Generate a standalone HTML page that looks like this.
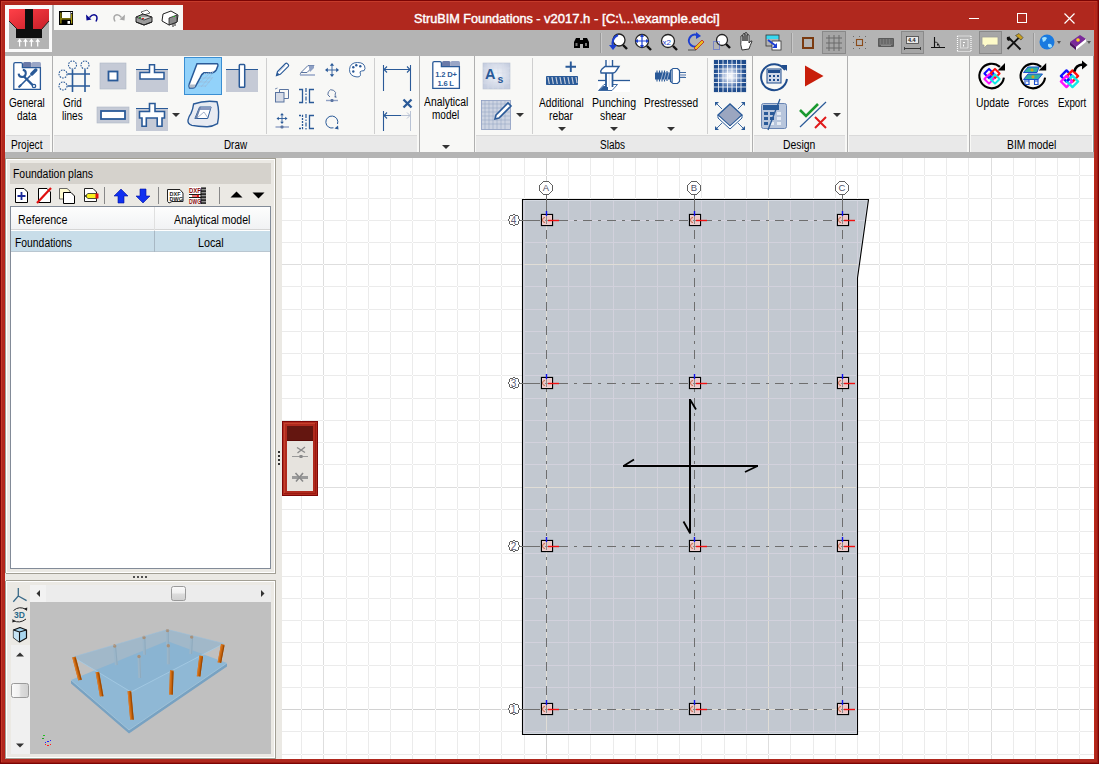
<!DOCTYPE html>
<html><head><meta charset="utf-8">
<style>
*{margin:0;padding:0;box-sizing:border-box}
html,body{width:1099px;height:764px;overflow:hidden;background:#b0281e;font-family:"Liberation Sans",sans-serif;font-size:12px;color:#000}
.a{position:absolute;overflow:visible}
.t{position:absolute;white-space:nowrap}
</style></head><body>
<div class="a" style="left:0px;top:0px;width:1099px;height:764px;background:#b0281e;"></div><div class="a" style="left:1px;top:1px;width:1097px;height:1px;background:#c43a2a;"></div><div class="a" style="left:1px;top:1px;width:1px;height:762px;background:#c43a2a;"></div><div class="a" style="left:1097px;top:1px;width:1px;height:762px;background:#9c1c12;"></div><div class="a" style="left:1px;top:762px;width:1097px;height:1px;background:#9c1c12;"></div><div class="a" style="left:4px;top:5px;width:1px;height:754px;background:#b82218;"></div><div class="a" style="left:1094px;top:5px;width:1px;height:754px;background:#c02818;"></div><div class="a" style="left:0px;top:0px;width:1099px;height:1px;background:#7c0404;"></div><div class="a" style="left:0px;top:0px;width:1px;height:764px;background:#7c0404;"></div><div class="a" style="left:1098px;top:0px;width:1px;height:764px;background:#7c0404;"></div><div class="a" style="left:0px;top:763px;width:1099px;height:1px;background:#7c0404;"></div><div class="t" style="left:414.00px;top:12.84px;font-size:12px;line-height:12px;color:#fff;transform:scaleX(1.0542);transform-origin:0 0;-webkit-text-stroke:0.4px #fff;">StruBIM Foundations -</div><div class="t" style="left:544.10px;top:12.84px;font-size:12px;line-height:12px;color:#fff;transform:scaleX(1.0840);transform-origin:0 0;-webkit-text-stroke:0.4px #fff;">v2017.h -</div><div class="t" style="left:602.30px;top:12.84px;font-size:12px;line-height:12px;color:#fff;transform:scaleX(1.1104);transform-origin:0 0;-webkit-text-stroke:0.4px #fff;">[C:\...\example.edci]</div><div class="a" style="left:969px;top:18px;width:10px;height:1px;background:#fff;"></div><div class="a" style="left:1017px;top:13px;width:10px;height:10px;border:1px solid #fff"></div><svg class="a" style="left:1064px;top:13px;" width="11" height="11" viewBox="0 0 11 11"><path d="M0.5 0.5L10.5 10.5M10.5 0.5L0.5 10.5" stroke="#fff" stroke-width="1.2"/></svg><div class="a" style="left:5px;top:5px;width:47px;height:47px;background:#fafafa;"></div><svg class="a" style="left:9px;top:9px;" width="40" height="40" viewBox="0 0 40 40"><rect width="40" height="40" fill="#b3b3b3"/>
    <defs><linearGradient id="lg" x1="0" y1="0" x2="1" y2="1"><stop offset="0" stop-color="#ff4048"/><stop offset="1" stop-color="#c81e28"/></linearGradient></defs>
    <path d="M0 0H40V12L33 20H8L0 12Z" fill="url(#lg)"/>
    <path d="M0 12L8 20" stroke="#222" stroke-width="1"/><path d="M40 12L33 20" stroke="#222" stroke-width="1"/>
    <rect x="16" y="0" width="8" height="20" fill="#0e0e0e"/>
    <rect x="7" y="20" width="26" height="9" fill="#0e0e0e"/>
    <g stroke="#fff" stroke-width="1.2" fill="none"><path d="M10.6 37.5V31M8.8 33L10.6 30.5L12.4 33"/><path d="M16.5 37.5V31M14.7 33L16.5 30.5L18.3 33"/><path d="M22.4 37.5V31M20.6 33L22.4 30.5L24.2 33"/><path d="M28.7 37.5V31M26.9 33L28.7 30.5L30.5 33"/></g></svg><div class="a" style="left:54px;top:5px;width:129px;height:25px;background:#f8f8f6;"></div><div class="a" style="left:52px;top:5px;width:2px;height:47px;background:#b4b4b4;"></div><svg class="a" style="left:59px;top:11px;" width="14" height="14" viewBox="0 0 14 14"><rect x="0" y="0" width="14" height="14" fill="#000"/><rect x="3" y="1" width="8.5" height="6" fill="#fff"/><rect x="1.3" y="1.5" width="1.2" height="11" fill="#a89a10"/><rect x="12" y="3" width="1.2" height="9.5" fill="#a89a10"/><rect x="1.5" y="7.3" width="11.5" height="1.2" fill="#a89a10"/><rect x="8.5" y="10" width="2.5" height="2.8" fill="#fff"/><rect x="12" y="1" width="1.2" height="1.2" fill="#fff"/></svg><svg class="a" style="left:85px;top:12px;" width="15" height="12" viewBox="0 0 15 12"><path d="M4.5 5.5Q8 1.5 11 3.5Q13 5.5 11 9.5" stroke="#0a0a90" stroke-width="1.5" fill="none"/><path d="M1 2.5L1.5 8.5L6.5 7.5Z" fill="#0a0a90"/></svg><svg class="a" style="left:111px;top:12px;" width="15" height="12" viewBox="0 0 15 12"><path d="M10.5 5.5Q7 1.5 4 3.5Q2 5.5 4 9.5" stroke="#a8a8a8" stroke-width="1.5" fill="none"/><path d="M14 2.5L13.5 8.5L8.5 7.5Z" fill="#a8a8a8"/></svg><svg class="a" style="left:135px;top:9px;" width="18" height="17" viewBox="0 0 18 17"><path d="M6 3L12 1L15 4L9 6Z" fill="#fff" stroke="#444" stroke-width="0.8"/><path d="M1 8L8 5L17 8V13L9 16L1 13Z" fill="#9a9a9a" stroke="#222" stroke-width="1"/><path d="M1 8L9 11L17 8" fill="#d8d8d8" stroke="#222" stroke-width="0.8"/><rect x="4" y="8" width="2" height="1" fill="#2a2"/><rect x="7" y="9" width="2" height="1" fill="#d22"/><path d="M1 13L9 16L17 13" stroke="#222" fill="none"/></svg><svg class="a" style="left:161px;top:10px;" width="18" height="17" viewBox="0 0 18 17"><path d="M2 4L10 1L17 5L16 12L8 15L1 11Z" fill="#fff" stroke="#222" stroke-width="1"/><path d="M8 8L16 5V12L8 15Z" fill="#8a8a8a" stroke="#222" stroke-width="0.8"/><rect x="12" y="6" width="2" height="1" fill="#2a2"/><path d="M12 14V17M14 13V16" stroke="#222"/></svg><div class="a" style="left:54px;top:30px;width:1040px;height:26px;background:#b4b4b4;"></div><div class="a" style="left:5px;top:52px;width:49px;height:4px;background:#b4b4b4;"></div><div class="a" style="left:600px;top:33px;width:1px;height:20px;background:#999;"></div><div class="a" style="left:601px;top:33px;width:1px;height:20px;background:#c8c8c8;"></div><div class="a" style="left:791px;top:33px;width:1px;height:20px;background:#999;"></div><div class="a" style="left:792px;top:33px;width:1px;height:20px;background:#c8c8c8;"></div><div class="a" style="left:1033px;top:33px;width:1px;height:20px;background:#999;"></div><div class="a" style="left:1034px;top:33px;width:1px;height:20px;background:#c8c8c8;"></div><div class="a" style="left:822px;top:31px;width:24px;height:23px;background:#a6a6a6;border:1px solid #8a8a8a"></div><div class="a" style="left:901px;top:31px;width:23px;height:23px;background:#a6a6a6;border:1px solid #8a8a8a"></div><div class="a" style="left:979px;top:31px;width:23px;height:23px;background:#a6a6a6;border:1px solid #8a8a8a"></div><svg class="a" style="left:573px;top:36px;" width="17" height="13" viewBox="0 0 17 13"><path d="M1 12V6L3 2H7V12ZM10 12V2H14L16 6V12Z" fill="#000"/><rect x="6" y="4" width="5" height="4" fill="#000"/><rect x="2.5" y="7" width="2" height="3" fill="#777"/><rect x="12" y="7" width="2" height="3" fill="#777"/></svg><svg class="a" style="left:0px;top:0px;pointer-events:none" width="1099" height="60" viewBox="0 0 1099 60"><circle cx="619" cy="40" r="6" fill="#fff" stroke="#222" stroke-width="1.3"/><path d="M623 45L627 49" stroke="#111" stroke-width="2.4"/><path d="M618 35Q611 38 613 47" stroke="#1d3fd0" stroke-width="2" fill="none"/><path d="M609 45L613 50L617 45Z" fill="#1d3fd0"/><circle cx="642" cy="41" r="6.5" fill="#fff" stroke="#222" stroke-width="1.3"/><path d="M647 46L651 50" stroke="#111" stroke-width="2.4"/><path d="M642 35V47M636 41H648" stroke="#1d3fd0" stroke-width="1.2"/><path d="M642 34L640 37H644ZM642 48L640 45H644ZM635 41L638 39V43ZM649 41L646 39V43Z" fill="#1d3fd0"/><circle cx="668" cy="41" r="6.5" fill="#fff" stroke="#222" stroke-width="1.3"/><path d="M673 46L677 50" stroke="#111" stroke-width="2.4"/><text x="662.5" y="44.5" font-size="8" fill="#1d3fd0" font-family="Liberation Sans">x2</text><path d="M697 35A6 6 0 1 0 699 45" stroke="#1d3fd0" stroke-width="2" fill="none"/><path d="M696 32L701 36L696 39Z" fill="#1d3fd0"/><path d="M694 48L702 40L704 42L696 50Z" fill="#e8c020" stroke="#c02020" stroke-width="0.8"/><path d="M688 50H696" stroke="#333" stroke-width="0.8"/><circle cx="722" cy="40" r="5.5" fill="#fff" stroke="#222" stroke-width="1.3"/><path d="M726 44L730 48" stroke="#111" stroke-width="2.4"/><rect x="713.5" y="41.5" width="6" height="8" fill="none" stroke="#2040e0" stroke-width="0.8" stroke-dasharray="1 1"/><path d="M742 50Q740 44 741 40V36Q742 35 743 36V41V34Q744 33 745 34V41V33Q746 32 747 33V41V35Q748 34 749 35V43Q751 40 752 41Q750 46 749 49Z" fill="#fff" stroke="#222" stroke-width="0.9"/><rect x="766" y="35" width="13" height="4" fill="#3ad8f0"/><rect x="766" y="35" width="13" height="11" fill="none" stroke="#333" stroke-width="0.8"/><rect x="772" y="41" width="9" height="9" fill="#fff" stroke="#333" stroke-width="0.8"/><path d="M768 40L776 46" stroke="#1d3fd0" stroke-width="1.8"/><path d="M777 43V48H772Z" fill="#1d3fd0"/><rect x="803" y="38" width="10" height="10" fill="none" stroke="#7a3a10" stroke-width="2"/><g stroke="#6a6a6a" stroke-width="1"><path d="M826 38H842M826 43H842M826 48H842M829 35V51M834 35V51M839 35V51"/></g><rect x="856.5" y="39.5" width="6" height="6" fill="none" stroke="#8a4a18" stroke-width="1.1"/><g fill="#6a6a6a"><rect x="853" y="36" width="1" height="1"/><rect x="859" y="36" width="1" height="1"/><rect x="865" y="36" width="1" height="1"/><rect x="853" y="42" width="1" height="1"/><rect x="865" y="42" width="1" height="1"/><rect x="853" y="48" width="1" height="1"/><rect x="859" y="48" width="1" height="1"/><rect x="865" y="48" width="1" height="1"/></g><rect x="878" y="38" width="16" height="9" rx="1" fill="#5a5a5a"/><g fill="#9a9a9a"><rect x="879.5" y="39.5" width="13" height="1"/><rect x="879.5" y="41.5" width="13" height="1"/><rect x="879.5" y="43.5" width="13" height="1"/></g><g fill="#5a5a5a"><rect x="881.5" y="39" width="1" height="5"/><rect x="884.5" y="39" width="1" height="5"/><rect x="887.5" y="39" width="1" height="5"/><rect x="890.5" y="39" width="1" height="5"/></g><rect x="881" y="45" width="10" height="1" fill="#8a8a8a"/><rect x="906.5" y="36.5" width="12" height="7" fill="#e8e8e8" stroke="#444" stroke-width="0.8"/><text x="908" y="42.3" font-size="5.5" font-weight="bold" fill="#222" font-family="Liberation Sans">4.4</text><path d="M904.5 48.5H920.5" stroke="#333" stroke-width="1"/><path d="M904.5 47V50M920.5 47V50" stroke="#333" stroke-width="0.9"/><path d="M931 47.5H945M934.5 37V47.5" stroke="#111" stroke-width="1.1"/><path d="M934.5 42Q939 42 939.5 47.5" stroke="#111" fill="none" stroke-width="0.8"/><rect x="937" y="44" width="1.5" height="1.5" fill="#111"/><g stroke="#fff" stroke-width="1.2" stroke-dasharray="1 1" fill="none"><path d="M957.5 36H971M957.5 51.5H971M957.5 36V51.5M971 36V51.5M960.5 39.5H968M960.5 48H968M960.5 39.5V48M968 39.5V48"/></g><g fill="#fff"><rect x="963" y="42" width="2" height="1"/><rect x="963" y="44.5" width="1" height="2"/></g><path d="M982 37H998V45H987L984 48V45H982Z" fill="#fdfac8" stroke="#999" stroke-width="0.8"/><path d="M1007.5 49L1019 37.5M1009 38L1020.5 49.5" stroke="#111" stroke-width="1.9"/><path d="M1015.5 35.5L1019 33.5L1023 37.5L1021 40Z" fill="#c8a020" stroke="#333" stroke-width="0.6"/><path d="M1007 37Q1006 40 1009 41L1010.5 39.5Q1009 38.5 1010 36.5Z" fill="#111"/><circle cx="1047" cy="42" r="7.5" fill="#1a7ae0"/><path d="M1042 38Q1045 36 1047 38Q1046 41 1043 42Z M1048 44Q1052 43 1052 47Q1049 49 1048 46Z" fill="#9fe0ff"/><path d="M1057 41L1061 41L1059 44Z" fill="#555"/><path d="M1070 42L1080 35L1086 39L1076 47Z" fill="#7a2a9a"/><path d="M1070 42L1076 47V50L1070 45Z" fill="#4a1060"/><path d="M1076 47L1086 39V42L1076 50Z" fill="#fff"/><circle cx="1078" cy="40" r="1.8" fill="#ffd020"/><path d="M1087 41L1091 41L1089 44Z" fill="#555"/></svg><div class="a" style="left:5px;top:56px;width:1089px;height:96px;background:#f8f8f6;"></div><div class="a" style="left:5px;top:135px;width:45px;height:17px;background:#e9e9e9;"></div><div class="a" style="left:5px;top:135px;width:45px;height:1px;background:#dadada;"></div><div class="a" style="left:54px;top:135px;width:363px;height:17px;background:#e9e9e9;"></div><div class="a" style="left:54px;top:135px;width:363px;height:1px;background:#dadada;"></div><div class="a" style="left:476px;top:135px;width:274px;height:17px;background:#e9e9e9;"></div><div class="a" style="left:476px;top:135px;width:274px;height:1px;background:#dadada;"></div><div class="a" style="left:754px;top:135px;width:91px;height:17px;background:#e9e9e9;"></div><div class="a" style="left:754px;top:135px;width:91px;height:1px;background:#dadada;"></div><div class="a" style="left:849px;top:135px;width:118px;height:17px;background:#e9e9e9;"></div><div class="a" style="left:849px;top:135px;width:118px;height:1px;background:#dadada;"></div><div class="a" style="left:971px;top:135px;width:121px;height:17px;background:#e9e9e9;"></div><div class="a" style="left:971px;top:135px;width:121px;height:1px;background:#dadada;"></div><div class="a" style="left:52px;top:56px;width:1px;height:96px;background:#b0b0b0;"></div><div class="a" style="left:419px;top:56px;width:1px;height:96px;background:#b0b0b0;"></div><div class="a" style="left:474px;top:56px;width:1px;height:96px;background:#b0b0b0;"></div><div class="a" style="left:752px;top:56px;width:1px;height:96px;background:#b0b0b0;"></div><div class="a" style="left:847px;top:56px;width:1px;height:96px;background:#b0b0b0;"></div><div class="a" style="left:969px;top:56px;width:1px;height:96px;background:#b0b0b0;"></div><div class="a" style="left:5px;top:56px;width:1px;height:96px;background:#eaf2f2;"></div><div class="a" style="left:1093px;top:56px;width:1px;height:96px;background:#909898;"></div><div class="a" style="left:1092px;top:135px;width:1px;height:17px;background:#fbfbfb;"></div><div class="a" style="left:266px;top:58px;width:1px;height:76px;background:#cfcfcf;"></div><div class="a" style="left:374px;top:58px;width:1px;height:76px;background:#cfcfcf;"></div><div class="a" style="left:532px;top:58px;width:1px;height:76px;background:#cfcfcf;"></div><div class="a" style="left:707px;top:58px;width:1px;height:76px;background:#cfcfcf;"></div><div class="t" style="left:11.00px;top:138.84px;font-size:12px;line-height:12px;color:#000;transform:scaleX(0.8421);transform-origin:0 0;">Project</div><div class="t" style="left:224.00px;top:138.84px;font-size:12px;line-height:12px;color:#000;transform:scaleX(0.8214);transform-origin:0 0;">Draw</div><div class="t" style="left:600.00px;top:138.84px;font-size:12px;line-height:12px;color:#000;transform:scaleX(0.8333);transform-origin:0 0;">Slabs</div><div class="t" style="left:783.00px;top:138.84px;font-size:12px;line-height:12px;color:#000;transform:scaleX(0.8649);transform-origin:0 0;">Design</div><div class="t" style="left:1007.00px;top:138.84px;font-size:12px;line-height:12px;color:#000;transform:scaleX(0.8596);transform-origin:0 0;">BIM model</div><div class="t" style="left:9.00px;top:96.84px;font-size:12px;line-height:12px;color:#000;transform:scaleX(0.8372);transform-origin:0 0;">General</div><div class="t" style="left:17.00px;top:109.84px;font-size:12px;line-height:12px;color:#000;transform:scaleX(0.8333);transform-origin:0 0;">data</div><div class="t" style="left:63.00px;top:96.84px;font-size:12px;line-height:12px;color:#000;transform:scaleX(0.8261);transform-origin:0 0;">Grid</div><div class="t" style="left:62.00px;top:109.84px;font-size:12px;line-height:12px;color:#000;transform:scaleX(0.8400);transform-origin:0 0;">lines</div><div class="t" style="left:424.00px;top:95.84px;font-size:12px;line-height:12px;color:#000;transform:scaleX(0.8627);transform-origin:0 0;">Analytical</div><div class="t" style="left:431.50px;top:108.84px;font-size:12px;line-height:12px;color:#000;transform:scaleX(0.8333);transform-origin:0 0;">model</div><div class="t" style="left:539.00px;top:96.84px;font-size:12px;line-height:12px;color:#000;transform:scaleX(0.8491);transform-origin:0 0;">Additional</div><div class="t" style="left:549.00px;top:109.84px;font-size:12px;line-height:12px;color:#000;transform:scaleX(0.8571);transform-origin:0 0;">rebar</div><div class="t" style="left:592.00px;top:96.84px;font-size:12px;line-height:12px;color:#000;transform:scaleX(0.8800);transform-origin:0 0;">Punching</div><div class="t" style="left:600.00px;top:109.84px;font-size:12px;line-height:12px;color:#000;transform:scaleX(0.8667);transform-origin:0 0;">shear</div><div class="t" style="left:644.00px;top:96.84px;font-size:12px;line-height:12px;color:#000;transform:scaleX(0.8438);transform-origin:0 0;">Prestressed</div><div class="t" style="left:975.50px;top:96.84px;font-size:12px;line-height:12px;color:#000;transform:scaleX(0.8590);transform-origin:0 0;">Update</div><div class="t" style="left:1017.50px;top:96.84px;font-size:12px;line-height:12px;color:#000;transform:scaleX(0.8297);transform-origin:0 0;">Forces</div><div class="t" style="left:1057.50px;top:96.84px;font-size:12px;line-height:12px;color:#000;transform:scaleX(0.8143);transform-origin:0 0;">Export</div><svg class="a" style="left:0px;top:0px;pointer-events:none" width="1099" height="160" viewBox="0 0 1099 160"><path d="M442 145H450L446 149Z" fill="#333"/><path d="M558 127H566L562 131Z" fill="#333"/><path d="M610 127H618L614 131Z" fill="#333"/><path d="M667 127H675L671 131Z" fill="#333"/><path d="M172 113H180L176 117Z" fill="#333"/><path d="M516 113H524L520 117Z" fill="#333"/><path d="M833 113H841L837 117Z" fill="#333"/></svg><svg class="a" style="left:0px;top:0px;pointer-events:none" width="1099" height="160" viewBox="0 0 1099 160"><path d="M23 67V63.5Q23 62 24.5 62H30Q31.5 62 31.5 63.5V67Z" fill="#6a7aa8"/><path d="M31.5 67V63.5Q31.5 62 33 62H39.5Q41 62 41 63.5V67Z" fill="#9aa6c6"/><path d="M13.8 89.3V64Q13.8 62.6 15.2 62.6H21Q22.4 62.6 22.4 64V67.6H40.4V89.3Z" fill="#fff" stroke="#2a5a98" stroke-width="1.3"/><g transform="translate(0,-1)"><path d="M31.8 75L35.8 71" stroke="#2a5a98" stroke-width="3.4" stroke-linecap="round"/><path d="M30.5 76.5L20 87" stroke="#2a5a98" stroke-width="1.6"/><path d="M20.5 86.5L19.2 87.8" stroke="#2a5a98" stroke-width="2.2" stroke-linecap="round"/><path d="M24 77.5L33.2 86.6" stroke="#2a5a98" stroke-width="2.3"/><path d="M18.6 74.6A3.6 3.6 0 1 0 22.8 70.8" stroke="#2a5a98" stroke-width="2" fill="none"/><circle cx="34" cy="87" r="1.7" fill="#fff" stroke="#2a5a98" stroke-width="1.3"/></g><g stroke="#2a5a98" stroke-width="1.6"><path d="M72.5 69.5V92M85 69.5V92M67.5 74H90M67.5 86H90"/></g><g fill="none" stroke="#2a5a98" stroke-width="1.1" stroke-dasharray="1.6 1.1"><circle cx="72.5" cy="65" r="4"/><circle cx="85" cy="65" r="4"/><circle cx="63" cy="74" r="4"/><circle cx="63" cy="86" r="4"/></g><rect x="100" y="63" width="26" height="26" fill="#c5cad6" stroke="#b0b7c6" stroke-width="0.6"/><rect x="108.5" y="71.5" width="9" height="9" fill="#fff" stroke="#2a5a98" stroke-width="1.8"/><rect x="97" y="107" width="32" height="16" fill="#c5cad6" stroke="#b0b7c6" stroke-width="0.6"/><rect x="101" y="111" width="24" height="8" fill="#fff" stroke="#2a5a98" stroke-width="1.8"/><rect x="136" y="69" width="32" height="23" fill="#c5cad6"/><path d="M136 69.5H168" stroke="#2a5a98" stroke-width="1"/><path d="M149.5 64.8V72.5H140V79H164V72.5H154.5V64.8Z" fill="#fff" stroke="#2a5a98" stroke-width="1.5"/><rect x="136" y="108" width="32" height="23" fill="#c5cad6"/><path d="M136 108.5H168" stroke="#2a5a98" stroke-width="1"/><path d="M149.5 103.5V111.5H139.5V118H142V126.3H146.3V118H157.2V126.3H162V118H164.5V111.5H155V103.5Z" fill="#fff" stroke="#2a5a98" stroke-width="1.6"/><rect x="184.5" y="57.5" width="37" height="37" fill="#92d2fa" stroke="#3a8ed2" stroke-width="1"/><g stroke="#9ab0cc" stroke-width="0.5"><path d="M201 87L212 74M205 87L213 77M198 84L210 73M199 78H212M197 82H210M198 86H206"/></g><path d="M189.5 88Q188.5 86 189.3 84L197 63.8H217Q218.2 64 217.8 66L216.3 69.8Q214.5 72.8 211 72.8L204 72.8Q201.5 74 200.2 77.6L195.5 86.3Q194.5 88 193 88Z" fill="#fff" stroke="#2a5a98" stroke-width="1.5"/><path d="M189.5 84.5H195.5L194.5 87.5H189.5Z" fill="#b4bcc8"/><path d="M204 74Q209 73 213 72.5" stroke="#c8d0dc" stroke-width="1" fill="none" stroke-dasharray="1 1"/><rect x="226" y="69" width="32" height="23" fill="#c5cad6"/><path d="M226 69.5H258" stroke="#2a5a98" stroke-width="1"/><rect x="239.3" y="64.6" width="5.4" height="22.6" rx="0.8" fill="#fff" stroke="#2a5a98" stroke-width="1.5"/><path d="M193.6 104Q205 100 217 101.8Q220 112 217.5 123.7Q212 127 206.4 126.7Q198 126.5 191.9 125.4Q187.5 124 188 120.2Q189 116 191 113.4Q193 109 193.6 104Z" fill="#e8ebf2" stroke="#2a5a98" stroke-width="1.4"/><path d="M199.6 107H211.1L207.7 118.5H194.9Z" fill="#fff" stroke="#2a5a98" stroke-width="1"/><path d="M199.6 107H211.1L210.2 110H198.7Z" fill="#8a9ac0"/><path d="M199.6 107L194.9 118.5H197L201 107Z" fill="#6a80a8"/><path d="M197 118L204 112L208 118" stroke="#6a80a8" stroke-width="0.6" fill="none"/><path d="M276.5 75.5L277.5 71.5L285.5 63.5Q286.5 62.8 287.5 63.8L288.3 64.6Q289 65.5 288.3 66.3L280.3 74.3Z" fill="#fff" stroke="#2a5a98" stroke-width="1.2"/><path d="M276.5 75.5L277.3 72.3L279.6 74.6Z" fill="#2a5a98"/><path d="M278.5 72L284.8 65.7" stroke="#8ca0c4" stroke-width="0.8"/><path d="M301 72.5L308 65.5H314L307 72.5Z" fill="#fff" stroke="#5a74a0" stroke-width="1"/><path d="M308.5 65.5H314V68L310 72" fill="#8ea0c4"/><path d="M300 75H315" stroke="#8ea0c4" stroke-width="1.4"/><path d="M301 72.5L300 74.5" stroke="#5a74a0" stroke-width="0.8"/><g stroke="#2a5a98" stroke-width="0.9" fill="none"><path d="M332 64V76M326 70H338"/></g><g fill="#2a5a98"><path d="M332 63L329.8 65.8H334.2Z"/><path d="M332 77L329.8 74.2H334.2Z"/><path d="M325 70L327.8 67.8V72.2Z"/><path d="M339 70L336.2 67.8V72.2Z"/></g><path d="M357.5 62.5Q365 62.5 365 68.5Q365 71.5 361.5 71Q359 71 360.5 74.5Q360.5 77.5 356 76.8Q349.5 76 349.5 69.5Q350 62.5 357.5 62.5Z" fill="#fff" stroke="#2a5a98" stroke-width="0.9"/><g fill="#2a5a98"><circle cx="353.3" cy="67.3" r="1.2"/><circle cx="356.3" cy="65.3" r="1.2"/><circle cx="360.3" cy="66.3" r="1.2"/><circle cx="353.3" cy="71.5" r="1.2"/></g><path d="M279.5 92V89.5H288.5V98.5H284" fill="none" stroke="#5a74a0" stroke-width="1"/><rect x="275.5" y="92.5" width="8.5" height="9.5" fill="#d6dbe6" stroke="#5a74a0" stroke-width="1"/><path d="M275 89L277.5 88" stroke="#5a74a0" stroke-width="0.8"/><g stroke="#2a5a98" stroke-width="1.3" fill="none"><path d="M299 89.5H302.5V102.5H299M314 89.5H309.5V102.5H314"/></g><path d="M306 88V103.5" stroke="#2a5a98" stroke-width="1.2" stroke-dasharray="4 1.5 1.5 1.5"/><path d="M335 95.5A3.8 3.8 0 1 0 330 97" stroke="#5a74a0" stroke-width="1" fill="none"/><path d="M334 97L336 95L336.5 98Z" fill="#5a74a0"/><path d="M326 100.5H338" stroke="#8ea0c4" stroke-width="1.4"/><rect x="330.5" y="99" width="3" height="3" rx="1" fill="#5a74a0"/><g stroke="#2a5a98" stroke-width="0.9" fill="none"><path d="M282 114V123M277.5 118.5H286.5"/></g><g fill="#2a5a98"><path d="M282 113L280.2 115.3H283.8Z"/><path d="M282 124L280.2 121.7H283.8Z"/><path d="M276.5 118.5L278.8 116.7V120.3Z"/><path d="M287.5 118.5L285.2 116.7V120.3Z"/></g><path d="M275.5 127H289" stroke="#8ea0c4" stroke-width="1.4"/><rect x="280.5" y="125.5" width="3" height="3" rx="1" fill="#5a74a0"/><g stroke="#2a5a98" stroke-width="1.3" fill="none"><path d="M314 115.5H309.5V128.5H314"/></g><path d="M299 115.5H302.5V128.5H299" stroke="#2a5a98" stroke-width="1.3" fill="none" stroke-dasharray="2 1"/><path d="M306 114V129.5" stroke="#2a5a98" stroke-width="1.2" stroke-dasharray="4 1.5 1.5 1.5"/><path d="M337.5 124A6 6 0 1 0 333.5 127.8" stroke="#2a5a98" stroke-width="1" fill="none"/><path d="M334.5 128.5L338 125.5L338.5 129.5Z" fill="#2a5a98"/><g stroke="#2a5a98" stroke-width="1.1" fill="none"><path d="M383.5 65V91M410.5 65V91M384 69.5H410M387 66.5L384 69.5L387 72.5M407 66.5L410 69.5L407 72.5"/><path d="M383.5 111V131M384 115.5H401M387 112.5L384 115.5L387 118.5"/></g><g stroke="#b8c2d4" stroke-width="1" fill="none"><path d="M401 115.5H410M407 112.5L410 115.5L407 118.5M410.5 111V131"/></g><path d="M403.5 99.5L411.5 107.5M411.5 99.5L403.5 107.5" stroke="#2a5a98" stroke-width="2.3"/><path d="M442 66V62.5Q442 61 443.5 61H449Q450.5 61 450.5 62.5V66Z" fill="#6a7aa8"/><path d="M450.5 66V62.5Q450.5 61 452 61H458.5Q460 61 460 62.5V66Z" fill="#9aa6c6"/><path d="M432.8 88.3V63Q432.8 61.6 434.2 61.6H440Q441.4 61.6 441.4 63V66.6H459.4V88.3Z" fill="#fff" stroke="#2a5a98" stroke-width="1.3"/><text x="435.3" y="77" font-size="7.6" font-weight="bold" fill="#2a5a98" font-family="Liberation Sans" letter-spacing="-0.2">1.2 D+</text><text x="437.5" y="85.5" font-size="7.6" font-weight="bold" fill="#2a5a98" font-family="Liberation Sans" letter-spacing="-0.2">1.6 L</text><defs><radialGradient id="rgas" cx="0.5" cy="0.45" r="0.6"><stop offset="0" stop-color="#f4f6fa"/><stop offset="1" stop-color="#c6cee0"/></radialGradient></defs><rect x="483" y="63" width="27" height="26" fill="url(#rgas)" stroke="#b9c1d2" stroke-width="0.6"/><g stroke="#d6dcea" stroke-width="0.6"><path d="M483 68H510M483 73H510M483 78H510M483 83H510M488 63V89M493 63V89M498 63V89M503 63V89"/></g><text x="485" y="79.3" font-size="14.5" font-weight="bold" fill="#2a5a98" font-family="Liberation Sans">A</text><text x="497.5" y="83" font-size="10.5" font-weight="bold" fill="#2a5a98" font-family="Liberation Sans">s</text><rect x="481.5" y="100.5" width="29" height="29" fill="#cdd4e2" stroke="#8a9cc0" stroke-width="0.8"/><g stroke="#98a8c6" stroke-width="0.6"><path d="M481 104H511M481 108H511M481 112H511M481 116H511M481 120H511M481 124H511M485 100V130M489 100V130M493 100V130M497 100V130M501 100V130M505 100V130"/></g><path d="M496 115L508 103L511 106L499 118L495 119Z" fill="#fff" stroke="#2a5a98" stroke-width="1.6"/><rect x="546" y="76" width="32" height="9" rx="0.8" fill="#2a5a98"/><g stroke="#c6cedc" stroke-width="1.2"><path d="M548 77L549.3 84M552 77L553.3 84M556 77L557.3 84M560 77L561.3 84M564 77L565.3 84M568 77L569.3 84M572 77L573.3 84M576 77L577 83"/></g><path d="M570.8 61.5V72M565.5 66.8H576" stroke="#2a5a98" stroke-width="1.9"/><rect x="598" y="80" width="32" height="12" fill="#fff"/><path d="M598 80.5H630" stroke="#2a5a98" stroke-width="1.3"/><path d="M598.5 90.5L604 84.5H617.5L612 90.5Z" fill="#fff" stroke="#2a5a98" stroke-width="0.9"/><path d="M599.5 90L603.5 86H608V90Z" fill="#2a5a98"/><rect x="606" y="60" width="6.5" height="27" fill="#fff"/><path d="M606 60V87M612.5 60V87" stroke="#2a5a98" stroke-width="1.4"/><path d="M609.2 60V87" stroke="#c8d2e2" stroke-width="0.6"/><path d="M601 73Q600 71 602 69L605 66.5H619L616 71Q615 73 613 73Z" fill="#fff" stroke="#2a5a98" stroke-width="1.4"/><path d="M606 73V87M612.5 73V87" stroke="#2a5a98" stroke-width="1.4"/><path d="M655 72.5H670V79.5H655Z" fill="#2a5a98"/><g stroke="#2a5a98" stroke-width="1.1"><path d="M657 70.5V81.5M659.5 70.5V81.5M662 70.5V81.5M664.5 70.5V81.5M667 71V81"/></g><g stroke="#a8b8d4" stroke-width="0.9"><path d="M661 80L663 72.5M664 80L666 72.5M667 80L669 72.5"/></g><path d="M670.5 70.5L673 68.5H677.5L679.5 70.5V81.5L677.5 83.5H673L670.5 81.5Z" fill="#fff" stroke="#2a5a98" stroke-width="1.2"/><rect x="671.5" y="70" width="1.2" height="12" fill="#2a5a98"/><path d="M679.5 72.5H686M679.5 75H686M679.5 77.5H686" stroke="#2a5a98" stroke-width="0.9"/><rect x="680" y="74.5" width="5" height="2" fill="#a8b8d4"/><defs><radialGradient id="rg"><stop offset="0" stop-color="#fff"/><stop offset="0.3" stop-color="#c4d0e6"/><stop offset="0.75" stop-color="#3a64a4"/><stop offset="1" stop-color="#1f4c8c"/></radialGradient></defs><rect x="714" y="60" width="32" height="32" fill="url(#rg)"/><rect x="714.5" y="60.5" width="31" height="31" fill="none" stroke="#1f4c8c" stroke-width="1.2"/><g stroke="#fff" stroke-width="0.8"><path d="M714 64.5H746M714 69H746M714 73.5H746M714 78H746M714 82.5H746M714 87H746M718.5 60V92M723 60V92M727.5 60V92M732 60V92M736.5 60V92M741 60V92"/></g><path d="M718 115L730 104L742 115L730 126Z" fill="#9ba6c0" stroke="#2a5a98" stroke-width="1.3"/><path d="M718 115V118L730 129L742 118V115L730 126Z" fill="#fff" stroke="#2a5a98" stroke-width="1"/><g stroke="#2a5a98" stroke-width="0.9"><path d="M716 103L722 109M744 103L738 109M716 129L722 123M744 129L738 123"/></g><g fill="#2a5a98"><path d="M715 102H719L715 106Z"/><path d="M745 102H741L745 106Z"/><path d="M715 130H719L715 126Z"/><path d="M745 130H741L745 126Z"/></g><path d="M785 70A13 13 0 1 0 787 79" stroke="#1f4c8c" stroke-width="2" fill="none"/><path d="M781 65H787V71Z" fill="#1f4c8c"/><rect x="767" y="69" width="14" height="14" fill="#cfd8e8" stroke="#1f4c8c" stroke-width="1"/><rect x="768" y="70" width="12" height="3" fill="#1f4c8c"/><g fill="#1f4c8c"><rect x="769" y="75" width="2" height="2"/><rect x="773" y="75" width="2" height="2"/><rect x="777" y="75" width="2" height="2"/><rect x="769" y="79" width="2" height="2"/><rect x="773" y="79" width="2" height="2"/><rect x="777" y="79" width="2" height="2"/></g><path d="M805 65.5L823.5 76L805 86.5Z" fill="#c81e0a"/><rect x="761.5" y="103.5" width="25" height="25" rx="2" fill="#b8c6dc" stroke="#6a86b4" stroke-width="1"/><rect x="763" y="105" width="16" height="5" fill="#2a5a98"/><g fill="#2a5a98"><rect x="764" y="112" width="4" height="3"/><rect x="770" y="112" width="4" height="3"/><rect x="764" y="117" width="4" height="3"/><rect x="770" y="117" width="4" height="3"/><rect x="764" y="122" width="4" height="3"/></g><g fill="#e6ecf4"><rect x="777" y="112" width="4" height="3"/><rect x="777" y="117" width="4" height="3"/><rect x="770" y="122" width="4" height="3"/><rect x="777" y="122" width="4" height="3"/></g><path d="M780 99L768 130" stroke="#2a5a98" stroke-width="1.3"/><path d="M800 127L826 102" stroke="#2a5a98" stroke-width="1.2"/><path d="M800 110L806 116L818 104" stroke="#1a9a30" stroke-width="2.6" fill="none"/><path d="M815 117L826 128M826 117L815 128" stroke="#e01a1a" stroke-width="2"/><path d="M999.93 66.86A12.3 12.3 0 1 0 1003.88 77.71" stroke="#000" stroke-width="2.1" fill="none"/><path d="M1005.0 63V70.5H997.5Z" fill="#000"/><path d="M984.4 73.5L989 68.9L993.6 73.5L989 78.1Z" fill="none" stroke="#1010ff" stroke-width="2" stroke-linejoin="round"/><path d="M990.4 73.5L995 68.9L999.6 73.5L995 78.1Z" fill="none" stroke="#ff1010" stroke-width="2" stroke-linejoin="round"/><path d="M984.4 79L989 74.4L993.6 79L989 83.6Z" fill="none" stroke="#ff10ff" stroke-width="2" stroke-linejoin="round"/><path d="M990.4 79L995 74.4L999.6 79L995 83.6Z" fill="none" stroke="#10e8e8" stroke-width="2" stroke-linejoin="round"/><path d="M991.3 75.8L989.46 77.64" stroke="#1010ff" stroke-width="2"/><path d="M1041.13 66.86A12.3 12.3 0 1 0 1045.08 77.71" stroke="#000" stroke-width="2.1" fill="none"/><path d="M1046.2 63V70.5H1038.7Z" fill="#000"/><path d="M1023.5 72.5L1028 67H1039L1037 72.5Z" fill="#30b0a0" stroke="#1a50d0" stroke-width="1"/><path d="M1023.5 79.5L1028 74H1042.5L1038 79.5Z" fill="#30b0a0" stroke="#1a50d0" stroke-width="1"/><circle cx="1032" cy="70" r="1.6" fill="#d0a020"/><circle cx="1033" cy="76.8" r="1.6" fill="#d0a020"/><path d="M1025 79V84.5M1029 79V84.5M1034.5 79V84.5M1038 79V84.5" stroke="#1a50d0" stroke-width="1.1"/><path d="M1025 84.5H1029.5M1034 84.5H1038.5M1026 81H1029M1035 81H1038" stroke="#1a50d0" stroke-width="1"/><path d="M1060.9 76.0L1066.5 70.4L1072.1 76.0L1066.5 81.6Z" fill="none" stroke="#1010ff" stroke-width="2.4" stroke-linejoin="round"/><path d="M1066.9 76.0L1072.5 70.4L1078.1 76.0L1072.5 81.6Z" fill="none" stroke="#ff1010" stroke-width="2.4" stroke-linejoin="round"/><path d="M1060.9 81.5L1066.5 75.9L1072.1 81.5L1066.5 87.1Z" fill="none" stroke="#ff10ff" stroke-width="2.4" stroke-linejoin="round"/><path d="M1066.9 81.5L1072.5 75.9L1078.1 81.5L1072.5 87.1Z" fill="none" stroke="#10e8e8" stroke-width="2.4" stroke-linejoin="round"/><path d="M1069.3 78.8L1067.06 81.04" stroke="#1010ff" stroke-width="2.4"/><path d="M1074.5 71.5Q1075.5 65 1083 64.5" stroke="#000" stroke-width="2.6" fill="none"/><path d="M1082 60.5L1087.5 65L1082 69.5Z" fill="#000"/></svg><div class="a" style="left:5px;top:152px;width:1089px;height:6px;background:#b4b4b4;"></div><div class="a" style="left:5px;top:158px;width:277px;height:601px;background:#ebe9e4;"></div><div class="a" style="left:5px;top:158px;width:271px;height:1px;background:#a29f94;"></div><div class="a" style="left:5px;top:158px;width:1px;height:601px;background:#a29f94;"></div><div class="a" style="left:6px;top:159px;width:269px;height:1px;background:#fff;"></div><div class="a" style="left:6px;top:159px;width:1px;height:598px;background:#fff;"></div><div class="a" style="left:275px;top:158px;width:1px;height:601px;background:#a29f94;"></div><div class="a" style="left:274px;top:159px;width:1px;height:599px;background:#fff;"></div><div class="a" style="left:6px;top:757px;width:269px;height:1px;background:#fff;"></div><div class="a" style="left:5px;top:758px;width:271px;height:1px;background:#a29f94;"></div><div class="a" style="left:10px;top:163px;width:261px;height:21px;background:#d5d2cc;"></div><div class="t" style="left:13.30px;top:167.84px;font-size:12px;line-height:12px;color:#000;transform:scaleX(0.8696);transform-origin:0 0;">Foundation plans</div><div class="a" style="left:10px;top:206px;width:261px;height:363px;background:#fff;border:1px solid #828b98"></div><div class="a" style="left:11px;top:207px;width:259px;height:23px;background:linear-gradient(#fdfdfd,#f1f2f4);border-bottom:1px solid #d5d5d5"></div><div class="a" style="left:154px;top:207px;width:1px;height:24px;background:#e0e0e0;"></div><div class="a" style="left:11px;top:231px;width:259px;height:21px;background:#c8dde9;"></div><div class="a" style="left:11px;top:251px;width:259px;height:1px;background:#b9c6d0;"></div><div class="a" style="left:154px;top:231px;width:1px;height:21px;background:#a8b8c4;"></div><div class="t" style="left:18.00px;top:213.84px;font-size:12px;line-height:12px;color:#000;transform:scaleX(0.8929);transform-origin:0 0;">Reference</div><div class="t" style="left:174.00px;top:213.84px;font-size:12px;line-height:12px;color:#000;transform:scaleX(0.8736);transform-origin:0 0;">Analytical model</div><div class="t" style="left:15.00px;top:236.84px;font-size:12px;line-height:12px;color:#000;transform:scaleX(0.8636);transform-origin:0 0;">Foundations</div><div class="t" style="left:198.00px;top:236.84px;font-size:12px;line-height:12px;color:#000;transform:scaleX(0.8966);transform-origin:0 0;">Local</div><div class="a" style="left:5px;top:573px;width:271px;height:1px;background:#a29f94;"></div><div class="a" style="left:6px;top:572px;width:269px;height:1px;background:#fff;"></div><div class="a" style="left:5px;top:574px;width:271px;height:7px;background:#ebe9e4;"></div><div class="a" style="left:133px;top:576px;width:2px;height:2px;background:#505050;"></div><div class="a" style="left:137px;top:576px;width:2px;height:2px;background:#505050;"></div><div class="a" style="left:141px;top:576px;width:2px;height:2px;background:#505050;"></div><div class="a" style="left:145px;top:576px;width:2px;height:2px;background:#505050;"></div><div class="a" style="left:5px;top:580px;width:271px;height:1px;background:#a29f94;"></div><div class="a" style="left:6px;top:581px;width:269px;height:1px;background:#fff;"></div><div class="a" style="left:5px;top:573px;width:1px;height:8px;background:#ebe9e4;"></div><div class="a" style="left:5px;top:574px;width:1px;height:6px;background:#ebe9e4;"></div><svg class="a" style="left:0px;top:150px;" width="290" height="620" viewBox="0 0 290 620"><g transform="translate(0,-150)"><path d="M15.5 188.5H24L27.5 192V202.5H15.5Z" fill="#fff" stroke="#000" stroke-width="1"/><path d="M21.5 192V200M17.5 196H25.5" stroke="#1a2a9a" stroke-width="1.8"/><path d="M38.5 188.5H47L50.5 192V202.5H38.5Z" fill="#fff" stroke="#000" stroke-width="1"/><path d="M37 203L51 188" stroke="#e01010" stroke-width="2.2"/><path d="M59.5 188.5H67L70 191V199H59.5Z" fill="#fffbd0" stroke="#444" stroke-width="0.8"/><path d="M63.5 192.5H71L74.5 196V203.5H63.5Z" fill="#fff" stroke="#000" stroke-width="1"/><path d="M84.5 188.5H93L96.5 192V201.5H84.5Z" fill="#fff" stroke="#222" stroke-width="1"/><path d="M85 196L88 193.5H97V198.5H88Z" fill="#f8f020" stroke="#222" stroke-width="0.8"/><rect x="95.5" y="193.5" width="3" height="5" fill="#e01010"/><path d="M85 196L87 195V197Z" fill="#333"/><rect x="104" y="187" width="1" height="17" fill="#888"/><rect x="158" y="187" width="1" height="17" fill="#888"/><rect x="219" y="187" width="1" height="17" fill="#888"/><path d="M121 189L128 196H124V203H118V196H114Z" fill="#1030f0" stroke="#0010a0" stroke-width="0.6"/><path d="M143 203L150 196H146V189H140V196H136Z" fill="#1030f0" stroke="#0010a0" stroke-width="0.6"/><path d="M167.5 189.5H180L183 193V201.5H172L169 203Q167 202 167.5 199Z" fill="#fff" stroke="#222" stroke-width="1"/><text x="169.5" y="195.5" font-size="5.5" font-family="Liberation Sans" font-weight="bold" fill="#222">DXF</text><text x="169.5" y="200.5" font-size="5.5" font-family="Liberation Sans" font-weight="bold" fill="#222">DWG</text><rect x="189" y="187" width="12" height="17" fill="#fff"/><text x="189" y="193" font-size="6.5" font-family="Liberation Sans" font-weight="bold" fill="#8a0a0a" textLength="12" lengthAdjust="spacingAndGlyphs">DXF</text><text x="189" y="203.5" font-size="6.5" font-family="Liberation Sans" font-weight="bold" fill="#8a0a0a" textLength="12" lengthAdjust="spacingAndGlyphs">DWG</text><path d="M189 194.5H201M189 197.5H201" stroke="#000" stroke-width="0.9"/><path d="M192 196H199" stroke="#e01010" stroke-width="1.2"/><path d="M197 194.3L199.5 196L197 197.7Z" fill="#e01010"/><rect x="201.5" y="188" width="4.5" height="15.5" fill="#909090"/><g fill="#000"><rect x="201" y="187.5" width="5" height="1.2"/><rect x="201" y="190.5" width="5" height="1.2"/><rect x="201" y="193.5" width="5" height="1.2"/><rect x="201" y="196.5" width="5" height="1.2"/><rect x="201" y="199.5" width="5" height="1.2"/><rect x="201" y="202.5" width="5" height="1.2"/><rect x="200.5" y="189" width="1" height="15"/></g><path d="M230.5 197.5H242.5L236.5 191.5Z" fill="#000"/><path d="M252.5 192.5H264.5L258.5 198.5Z" fill="#000"/><rect x="30" y="585" width="241" height="17" fill="#ececec"/><rect x="30" y="585" width="16" height="17" fill="#f2f2f2"/><path d="M40 590V597L36.5 593.5Z" fill="#333"/><path d="M261 590V597L264.5 593.5Z" fill="#333"/><defs><linearGradient id="thh" x1="0" x2="0" y1="0" y2="1"><stop offset="0" stop-color="#fafafa"/><stop offset="0.45" stop-color="#f0f0f0"/><stop offset="0.55" stop-color="#dcdcdc"/><stop offset="1" stop-color="#d0d0d0"/></linearGradient></defs><rect x="171.5" y="586.5" width="14" height="14" rx="2" fill="url(#thh)" stroke="#9a9a9a" stroke-width="1"/><rect x="30" y="602" width="241" height="152" fill="#c0c0c0"/><rect x="11" y="645" width="19" height="109" fill="#f0f0f0"/><path d="M16 656.5H24L20 652.5Z" fill="#333"/><path d="M16 743.5H24L20 747.5Z" fill="#333"/><defs><linearGradient id="thg" x1="0" x2="1"><stop offset="0" stop-color="#fafafa"/><stop offset="0.45" stop-color="#f0f0f0"/><stop offset="0.55" stop-color="#dcdcdc"/><stop offset="1" stop-color="#d0d0d0"/></linearGradient></defs><rect x="11.5" y="683.5" width="17" height="14" rx="2" fill="url(#thg)" stroke="#9a9a9a" stroke-width="1"/><path d="M18.3 588V596L13.3 601.7M18.3 596L26.6 600.6" stroke="#3a6a88" stroke-width="1.3" fill="none"/><text x="14" y="618" font-size="8.5" font-weight="bold" fill="#2a6a8a" font-family="Liberation Sans">3D</text><path d="M13.5 610.5Q19.5 605.5 26 609.5M26 619Q19.5 624 13.5 620.5" stroke="#222" stroke-width="1" fill="none"/><path d="M24 608.5L27 611L27.3 607.5Z M15.5 621.5L12.5 619L12.3 622.5Z" fill="#222"/><path d="M13.5 630L20 627.5L26.5 630V638L19.5 642L13.5 637.5Z" fill="#a8d6ee" stroke="#111" stroke-width="1.2" stroke-linejoin="round"/><path d="M13.5 630L19.5 632V642L13.5 637.5Z" fill="#c6e4f4"/><path d="M13.5 630L19.5 632L26.5 630M19.5 632V642" stroke="#111" stroke-width="1.1" fill="none"/><path d="M71 680L167 641L227 663L129 730Z" fill="#8fb8d5"/><path d="M71 680V683.5L129 733.5L227 666.5V663L129 730Z" fill="#78a2c2"/><path d="M71 680L129 730L227 663" stroke="#a4c8e0" stroke-width="0.7" fill="none"/><path d="M114.7 646L116.4 665" stroke="#b4bcc0" stroke-width="3"/><path d="M115.5 646L117.2 665" stroke="#98a2a8" stroke-width="1"/><circle cx="114.7" cy="646" r="1.7" fill="#d06810"/><path d="M144 637.5L144.6 654.8" stroke="#b4bcc0" stroke-width="3"/><path d="M144.8 637.5L145.4 654.8" stroke="#98a2a8" stroke-width="1"/><circle cx="144" cy="637.5" r="1.7" fill="#d06810"/><path d="M167.5 630.6L167.5 646" stroke="#b4bcc0" stroke-width="3"/><path d="M168.3 630.6L168.3 646" stroke="#98a2a8" stroke-width="1"/><circle cx="167.5" cy="630.6" r="1.7" fill="#d06810"/><path d="M191.7 637L190.8 654" stroke="#b4bcc0" stroke-width="3"/><path d="M192.5 637L191.60000000000002 654" stroke="#98a2a8" stroke-width="1"/><circle cx="191.7" cy="637" r="1.7" fill="#d06810"/><path d="M139 656.5L139.8 678" stroke="#b4bcc0" stroke-width="3"/><path d="M139.8 656.5L140.60000000000002 678" stroke="#98a2a8" stroke-width="1"/><circle cx="139" cy="656.5" r="1.7" fill="#d06810"/><path d="M168.3 645.8L168.3 664.3" stroke="#b4bcc0" stroke-width="3"/><path d="M169.10000000000002 645.8L169.10000000000002 664.3" stroke="#98a2a8" stroke-width="1"/><circle cx="168.3" cy="645.8" r="1.7" fill="#d06810"/><path d="M73 657L167.5 629.5L224 643.5L131 692Z" fill="#86b0d0" fill-opacity="0.55"/><path d="M73 657L131 692L224 643.5" stroke="#a6cbe4" stroke-width="0.8" fill="none"/><path d="M73 657L167.5 629.5L224 643.5" stroke="#9cc0da" stroke-width="0.6" fill="none"/><path d="M74 657L80 680" stroke="#c8640a" stroke-width="3.6"/><path d="M75.2 658L81.2 680" stroke="#9a4804" stroke-width="1.1"/><path d="M72.7 657L78.7 680" stroke="#e08030" stroke-width="0.8"/><path d="M97.4 672L101.7 696.3" stroke="#c8640a" stroke-width="3.6"/><path d="M98.60000000000001 673L102.9 696.3" stroke="#9a4804" stroke-width="1.1"/><path d="M96.10000000000001 672L100.4 696.3" stroke="#e08030" stroke-width="0.8"/><path d="M129.4 691L132 719.7" stroke="#c8640a" stroke-width="3.6"/><path d="M130.6 692L133.2 719.7" stroke="#9a4804" stroke-width="1.1"/><path d="M128.1 691L130.7 719.7" stroke="#e08030" stroke-width="0.8"/><path d="M171.8 670.4L171 694.6" stroke="#c8640a" stroke-width="3.6"/><path d="M173.0 671.4L172.2 694.6" stroke="#9a4804" stroke-width="1.1"/><path d="M170.5 670.4L169.7 694.6" stroke="#e08030" stroke-width="0.8"/><path d="M201.2 655.7L198.6 676.4" stroke="#c8640a" stroke-width="3.6"/><path d="M202.39999999999998 656.7L199.79999999999998 676.4" stroke="#9a4804" stroke-width="1.1"/><path d="M199.89999999999998 655.7L197.29999999999998 676.4" stroke="#e08030" stroke-width="0.8"/><path d="M222.8 644.4L219.4 662.6" stroke="#c8640a" stroke-width="3.6"/><path d="M224.0 645.4L220.6 662.6" stroke="#9a4804" stroke-width="1.1"/><path d="M221.5 644.4L218.1 662.6" stroke="#e08030" stroke-width="0.8"/><g><rect x="43" y="735" width="2" height="1" fill="#20c020"/><rect x="42" y="738" width="2" height="1" fill="#20a020"/><rect x="45" y="742" width="1" height="1" fill="#2020ff"/><rect x="47" y="741" width="2" height="1" fill="#2020ff"/><rect x="50" y="740" width="1" height="1" fill="#2020ff"/><rect x="45" y="744" width="1" height="1" fill="#ff2020"/><rect x="47" y="745" width="2" height="1" fill="#ff2020"/><rect x="50" y="744" width="1" height="1" fill="#ff2020"/></g></g></svg><div class="a" style="left:276px;top:158px;width:6px;height:601px;background:#ebe9e4;"></div><div class="a" style="left:278px;top:451px;width:2px;height:2px;background:#303030;"></div><div class="a" style="left:278px;top:455px;width:2px;height:2px;background:#303030;"></div><div class="a" style="left:278px;top:459px;width:2px;height:2px;background:#303030;"></div><div class="a" style="left:278px;top:463px;width:2px;height:2px;background:#303030;"></div><svg class="a" style="left:282px;top:158px" width="812" height="601" viewBox="0 0 812 601"><rect x="0" y="0" width="812" height="601" fill="#fff"/><rect x="19" y="0" width="1" height="601" fill="#ebebeb"/><rect x="41" y="0" width="1" height="601" fill="#dedede"/><rect x="64" y="0" width="1" height="601" fill="#ebebeb"/><rect x="86" y="0" width="1" height="601" fill="#ebebeb"/><rect x="108" y="0" width="1" height="601" fill="#ebebeb"/><rect x="130" y="0" width="1" height="601" fill="#ebebeb"/><rect x="153" y="0" width="1" height="601" fill="#ebebeb"/><rect x="175" y="0" width="1" height="601" fill="#ebebeb"/><rect x="197" y="0" width="1" height="601" fill="#ebebeb"/><rect x="219" y="0" width="1" height="601" fill="#ebebeb"/><rect x="242" y="0" width="1" height="601" fill="#ebebeb"/><rect x="264" y="0" width="1" height="601" fill="#d2d2d2"/><rect x="286" y="0" width="1" height="601" fill="#ebebeb"/><rect x="308" y="0" width="1" height="601" fill="#ebebeb"/><rect x="331" y="0" width="1" height="601" fill="#ebebeb"/><rect x="353" y="0" width="1" height="601" fill="#ebebeb"/><rect x="375" y="0" width="1" height="601" fill="#ebebeb"/><rect x="397" y="0" width="1" height="601" fill="#ebebeb"/><rect x="419" y="0" width="1" height="601" fill="#ebebeb"/><rect x="442" y="0" width="1" height="601" fill="#ebebeb"/><rect x="464" y="0" width="1" height="601" fill="#ebebeb"/><rect x="486" y="0" width="1" height="601" fill="#dedede"/><rect x="508" y="0" width="1" height="601" fill="#ebebeb"/><rect x="531" y="0" width="1" height="601" fill="#ebebeb"/><rect x="553" y="0" width="1" height="601" fill="#ebebeb"/><rect x="575" y="0" width="1" height="601" fill="#ebebeb"/><rect x="597" y="0" width="1" height="601" fill="#ebebeb"/><rect x="620" y="0" width="1" height="601" fill="#ebebeb"/><rect x="642" y="0" width="1" height="601" fill="#ebebeb"/><rect x="664" y="0" width="1" height="601" fill="#ebebeb"/><rect x="686" y="0" width="1" height="601" fill="#ebebeb"/><rect x="709" y="0" width="1" height="601" fill="#dedede"/><rect x="731" y="0" width="1" height="601" fill="#ebebeb"/><rect x="753" y="0" width="1" height="601" fill="#ebebeb"/><rect x="775" y="0" width="1" height="601" fill="#ebebeb"/><rect x="797" y="0" width="1" height="601" fill="#ebebeb"/><rect x="0" y="17" width="812" height="1" fill="#ebebeb"/><rect x="0" y="40" width="812" height="1" fill="#ebebeb"/><rect x="0" y="62" width="812" height="1" fill="#ebebeb"/><rect x="0" y="84" width="812" height="1" fill="#ebebeb"/><rect x="0" y="106" width="812" height="1" fill="#dedede"/><rect x="0" y="128" width="812" height="1" fill="#ebebeb"/><rect x="0" y="151" width="812" height="1" fill="#ebebeb"/><rect x="0" y="173" width="812" height="1" fill="#ebebeb"/><rect x="0" y="195" width="812" height="1" fill="#ebebeb"/><rect x="0" y="217" width="812" height="1" fill="#ebebeb"/><rect x="0" y="240" width="812" height="1" fill="#ebebeb"/><rect x="0" y="262" width="812" height="1" fill="#ebebeb"/><rect x="0" y="284" width="812" height="1" fill="#ebebeb"/><rect x="0" y="306" width="812" height="1" fill="#ebebeb"/><rect x="0" y="329" width="812" height="1" fill="#dedede"/><rect x="0" y="351" width="812" height="1" fill="#ebebeb"/><rect x="0" y="373" width="812" height="1" fill="#ebebeb"/><rect x="0" y="395" width="812" height="1" fill="#ebebeb"/><rect x="0" y="418" width="812" height="1" fill="#ebebeb"/><rect x="0" y="440" width="812" height="1" fill="#ebebeb"/><rect x="0" y="462" width="812" height="1" fill="#ebebeb"/><rect x="0" y="484" width="812" height="1" fill="#ebebeb"/><rect x="0" y="507" width="812" height="1" fill="#ebebeb"/><rect x="0" y="529" width="812" height="1" fill="#ebebeb"/><rect x="0" y="551" width="812" height="1" fill="#d2d2d2"/><rect x="0" y="573" width="812" height="1" fill="#ebebeb"/><rect x="0" y="596" width="812" height="1" fill="#ebebeb"/><path d="M19 17h1v1h-1zM19 40h1v1h-1zM19 62h1v1h-1zM19 84h1v1h-1zM19 106h1v1h-1zM19 128h1v1h-1zM19 151h1v1h-1zM19 173h1v1h-1zM19 195h1v1h-1zM19 217h1v1h-1zM19 240h1v1h-1zM19 262h1v1h-1zM19 284h1v1h-1zM19 306h1v1h-1zM19 329h1v1h-1zM19 351h1v1h-1zM19 373h1v1h-1zM19 395h1v1h-1zM19 418h1v1h-1zM19 440h1v1h-1zM19 462h1v1h-1zM19 484h1v1h-1zM19 507h1v1h-1zM19 529h1v1h-1zM19 551h1v1h-1zM19 573h1v1h-1zM19 596h1v1h-1zM41 17h1v1h-1zM41 40h1v1h-1zM41 62h1v1h-1zM41 84h1v1h-1zM41 106h1v1h-1zM41 128h1v1h-1zM41 151h1v1h-1zM41 173h1v1h-1zM41 195h1v1h-1zM41 217h1v1h-1zM41 240h1v1h-1zM41 262h1v1h-1zM41 284h1v1h-1zM41 306h1v1h-1zM41 329h1v1h-1zM41 351h1v1h-1zM41 373h1v1h-1zM41 395h1v1h-1zM41 418h1v1h-1zM41 440h1v1h-1zM41 462h1v1h-1zM41 484h1v1h-1zM41 507h1v1h-1zM41 529h1v1h-1zM41 551h1v1h-1zM41 573h1v1h-1zM41 596h1v1h-1zM64 17h1v1h-1zM64 40h1v1h-1zM64 62h1v1h-1zM64 84h1v1h-1zM64 106h1v1h-1zM64 128h1v1h-1zM64 151h1v1h-1zM64 173h1v1h-1zM64 195h1v1h-1zM64 217h1v1h-1zM64 240h1v1h-1zM64 262h1v1h-1zM64 284h1v1h-1zM64 306h1v1h-1zM64 329h1v1h-1zM64 351h1v1h-1zM64 373h1v1h-1zM64 395h1v1h-1zM64 418h1v1h-1zM64 440h1v1h-1zM64 462h1v1h-1zM64 484h1v1h-1zM64 507h1v1h-1zM64 529h1v1h-1zM64 551h1v1h-1zM64 573h1v1h-1zM64 596h1v1h-1zM86 17h1v1h-1zM86 40h1v1h-1zM86 62h1v1h-1zM86 84h1v1h-1zM86 106h1v1h-1zM86 128h1v1h-1zM86 151h1v1h-1zM86 173h1v1h-1zM86 195h1v1h-1zM86 217h1v1h-1zM86 240h1v1h-1zM86 262h1v1h-1zM86 284h1v1h-1zM86 306h1v1h-1zM86 329h1v1h-1zM86 351h1v1h-1zM86 373h1v1h-1zM86 395h1v1h-1zM86 418h1v1h-1zM86 440h1v1h-1zM86 462h1v1h-1zM86 484h1v1h-1zM86 507h1v1h-1zM86 529h1v1h-1zM86 551h1v1h-1zM86 573h1v1h-1zM86 596h1v1h-1zM108 17h1v1h-1zM108 40h1v1h-1zM108 62h1v1h-1zM108 84h1v1h-1zM108 106h1v1h-1zM108 128h1v1h-1zM108 151h1v1h-1zM108 173h1v1h-1zM108 195h1v1h-1zM108 217h1v1h-1zM108 240h1v1h-1zM108 262h1v1h-1zM108 284h1v1h-1zM108 306h1v1h-1zM108 329h1v1h-1zM108 351h1v1h-1zM108 373h1v1h-1zM108 395h1v1h-1zM108 418h1v1h-1zM108 440h1v1h-1zM108 462h1v1h-1zM108 484h1v1h-1zM108 507h1v1h-1zM108 529h1v1h-1zM108 551h1v1h-1zM108 573h1v1h-1zM108 596h1v1h-1zM130 17h1v1h-1zM130 40h1v1h-1zM130 62h1v1h-1zM130 84h1v1h-1zM130 106h1v1h-1zM130 128h1v1h-1zM130 151h1v1h-1zM130 173h1v1h-1zM130 195h1v1h-1zM130 217h1v1h-1zM130 240h1v1h-1zM130 262h1v1h-1zM130 284h1v1h-1zM130 306h1v1h-1zM130 329h1v1h-1zM130 351h1v1h-1zM130 373h1v1h-1zM130 395h1v1h-1zM130 418h1v1h-1zM130 440h1v1h-1zM130 462h1v1h-1zM130 484h1v1h-1zM130 507h1v1h-1zM130 529h1v1h-1zM130 551h1v1h-1zM130 573h1v1h-1zM130 596h1v1h-1zM153 17h1v1h-1zM153 40h1v1h-1zM153 62h1v1h-1zM153 84h1v1h-1zM153 106h1v1h-1zM153 128h1v1h-1zM153 151h1v1h-1zM153 173h1v1h-1zM153 195h1v1h-1zM153 217h1v1h-1zM153 240h1v1h-1zM153 262h1v1h-1zM153 284h1v1h-1zM153 306h1v1h-1zM153 329h1v1h-1zM153 351h1v1h-1zM153 373h1v1h-1zM153 395h1v1h-1zM153 418h1v1h-1zM153 440h1v1h-1zM153 462h1v1h-1zM153 484h1v1h-1zM153 507h1v1h-1zM153 529h1v1h-1zM153 551h1v1h-1zM153 573h1v1h-1zM153 596h1v1h-1zM175 17h1v1h-1zM175 40h1v1h-1zM175 62h1v1h-1zM175 84h1v1h-1zM175 106h1v1h-1zM175 128h1v1h-1zM175 151h1v1h-1zM175 173h1v1h-1zM175 195h1v1h-1zM175 217h1v1h-1zM175 240h1v1h-1zM175 262h1v1h-1zM175 284h1v1h-1zM175 306h1v1h-1zM175 329h1v1h-1zM175 351h1v1h-1zM175 373h1v1h-1zM175 395h1v1h-1zM175 418h1v1h-1zM175 440h1v1h-1zM175 462h1v1h-1zM175 484h1v1h-1zM175 507h1v1h-1zM175 529h1v1h-1zM175 551h1v1h-1zM175 573h1v1h-1zM175 596h1v1h-1zM197 17h1v1h-1zM197 40h1v1h-1zM197 62h1v1h-1zM197 84h1v1h-1zM197 106h1v1h-1zM197 128h1v1h-1zM197 151h1v1h-1zM197 173h1v1h-1zM197 195h1v1h-1zM197 217h1v1h-1zM197 240h1v1h-1zM197 262h1v1h-1zM197 284h1v1h-1zM197 306h1v1h-1zM197 329h1v1h-1zM197 351h1v1h-1zM197 373h1v1h-1zM197 395h1v1h-1zM197 418h1v1h-1zM197 440h1v1h-1zM197 462h1v1h-1zM197 484h1v1h-1zM197 507h1v1h-1zM197 529h1v1h-1zM197 551h1v1h-1zM197 573h1v1h-1zM197 596h1v1h-1zM219 17h1v1h-1zM219 40h1v1h-1zM219 62h1v1h-1zM219 84h1v1h-1zM219 106h1v1h-1zM219 128h1v1h-1zM219 151h1v1h-1zM219 173h1v1h-1zM219 195h1v1h-1zM219 217h1v1h-1zM219 240h1v1h-1zM219 262h1v1h-1zM219 284h1v1h-1zM219 306h1v1h-1zM219 329h1v1h-1zM219 351h1v1h-1zM219 373h1v1h-1zM219 395h1v1h-1zM219 418h1v1h-1zM219 440h1v1h-1zM219 462h1v1h-1zM219 484h1v1h-1zM219 507h1v1h-1zM219 529h1v1h-1zM219 551h1v1h-1zM219 573h1v1h-1zM219 596h1v1h-1zM242 17h1v1h-1zM242 40h1v1h-1zM242 62h1v1h-1zM242 84h1v1h-1zM242 106h1v1h-1zM242 128h1v1h-1zM242 151h1v1h-1zM242 173h1v1h-1zM242 195h1v1h-1zM242 217h1v1h-1zM242 240h1v1h-1zM242 262h1v1h-1zM242 284h1v1h-1zM242 306h1v1h-1zM242 329h1v1h-1zM242 351h1v1h-1zM242 373h1v1h-1zM242 395h1v1h-1zM242 418h1v1h-1zM242 440h1v1h-1zM242 462h1v1h-1zM242 484h1v1h-1zM242 507h1v1h-1zM242 529h1v1h-1zM242 551h1v1h-1zM242 573h1v1h-1zM242 596h1v1h-1zM264 17h1v1h-1zM264 40h1v1h-1zM264 62h1v1h-1zM264 84h1v1h-1zM264 106h1v1h-1zM264 128h1v1h-1zM264 151h1v1h-1zM264 173h1v1h-1zM264 195h1v1h-1zM264 217h1v1h-1zM264 240h1v1h-1zM264 262h1v1h-1zM264 284h1v1h-1zM264 306h1v1h-1zM264 329h1v1h-1zM264 351h1v1h-1zM264 373h1v1h-1zM264 395h1v1h-1zM264 418h1v1h-1zM264 440h1v1h-1zM264 462h1v1h-1zM264 484h1v1h-1zM264 507h1v1h-1zM264 529h1v1h-1zM264 551h1v1h-1zM264 573h1v1h-1zM264 596h1v1h-1zM286 17h1v1h-1zM286 40h1v1h-1zM286 62h1v1h-1zM286 84h1v1h-1zM286 106h1v1h-1zM286 128h1v1h-1zM286 151h1v1h-1zM286 173h1v1h-1zM286 195h1v1h-1zM286 217h1v1h-1zM286 240h1v1h-1zM286 262h1v1h-1zM286 284h1v1h-1zM286 306h1v1h-1zM286 329h1v1h-1zM286 351h1v1h-1zM286 373h1v1h-1zM286 395h1v1h-1zM286 418h1v1h-1zM286 440h1v1h-1zM286 462h1v1h-1zM286 484h1v1h-1zM286 507h1v1h-1zM286 529h1v1h-1zM286 551h1v1h-1zM286 573h1v1h-1zM286 596h1v1h-1zM308 17h1v1h-1zM308 40h1v1h-1zM308 62h1v1h-1zM308 84h1v1h-1zM308 106h1v1h-1zM308 128h1v1h-1zM308 151h1v1h-1zM308 173h1v1h-1zM308 195h1v1h-1zM308 217h1v1h-1zM308 240h1v1h-1zM308 262h1v1h-1zM308 284h1v1h-1zM308 306h1v1h-1zM308 329h1v1h-1zM308 351h1v1h-1zM308 373h1v1h-1zM308 395h1v1h-1zM308 418h1v1h-1zM308 440h1v1h-1zM308 462h1v1h-1zM308 484h1v1h-1zM308 507h1v1h-1zM308 529h1v1h-1zM308 551h1v1h-1zM308 573h1v1h-1zM308 596h1v1h-1zM331 17h1v1h-1zM331 40h1v1h-1zM331 62h1v1h-1zM331 84h1v1h-1zM331 106h1v1h-1zM331 128h1v1h-1zM331 151h1v1h-1zM331 173h1v1h-1zM331 195h1v1h-1zM331 217h1v1h-1zM331 240h1v1h-1zM331 262h1v1h-1zM331 284h1v1h-1zM331 306h1v1h-1zM331 329h1v1h-1zM331 351h1v1h-1zM331 373h1v1h-1zM331 395h1v1h-1zM331 418h1v1h-1zM331 440h1v1h-1zM331 462h1v1h-1zM331 484h1v1h-1zM331 507h1v1h-1zM331 529h1v1h-1zM331 551h1v1h-1zM331 573h1v1h-1zM331 596h1v1h-1zM353 17h1v1h-1zM353 40h1v1h-1zM353 62h1v1h-1zM353 84h1v1h-1zM353 106h1v1h-1zM353 128h1v1h-1zM353 151h1v1h-1zM353 173h1v1h-1zM353 195h1v1h-1zM353 217h1v1h-1zM353 240h1v1h-1zM353 262h1v1h-1zM353 284h1v1h-1zM353 306h1v1h-1zM353 329h1v1h-1zM353 351h1v1h-1zM353 373h1v1h-1zM353 395h1v1h-1zM353 418h1v1h-1zM353 440h1v1h-1zM353 462h1v1h-1zM353 484h1v1h-1zM353 507h1v1h-1zM353 529h1v1h-1zM353 551h1v1h-1zM353 573h1v1h-1zM353 596h1v1h-1zM375 17h1v1h-1zM375 40h1v1h-1zM375 62h1v1h-1zM375 84h1v1h-1zM375 106h1v1h-1zM375 128h1v1h-1zM375 151h1v1h-1zM375 173h1v1h-1zM375 195h1v1h-1zM375 217h1v1h-1zM375 240h1v1h-1zM375 262h1v1h-1zM375 284h1v1h-1zM375 306h1v1h-1zM375 329h1v1h-1zM375 351h1v1h-1zM375 373h1v1h-1zM375 395h1v1h-1zM375 418h1v1h-1zM375 440h1v1h-1zM375 462h1v1h-1zM375 484h1v1h-1zM375 507h1v1h-1zM375 529h1v1h-1zM375 551h1v1h-1zM375 573h1v1h-1zM375 596h1v1h-1zM397 17h1v1h-1zM397 40h1v1h-1zM397 62h1v1h-1zM397 84h1v1h-1zM397 106h1v1h-1zM397 128h1v1h-1zM397 151h1v1h-1zM397 173h1v1h-1zM397 195h1v1h-1zM397 217h1v1h-1zM397 240h1v1h-1zM397 262h1v1h-1zM397 284h1v1h-1zM397 306h1v1h-1zM397 329h1v1h-1zM397 351h1v1h-1zM397 373h1v1h-1zM397 395h1v1h-1zM397 418h1v1h-1zM397 440h1v1h-1zM397 462h1v1h-1zM397 484h1v1h-1zM397 507h1v1h-1zM397 529h1v1h-1zM397 551h1v1h-1zM397 573h1v1h-1zM397 596h1v1h-1zM419 17h1v1h-1zM419 40h1v1h-1zM419 62h1v1h-1zM419 84h1v1h-1zM419 106h1v1h-1zM419 128h1v1h-1zM419 151h1v1h-1zM419 173h1v1h-1zM419 195h1v1h-1zM419 217h1v1h-1zM419 240h1v1h-1zM419 262h1v1h-1zM419 284h1v1h-1zM419 306h1v1h-1zM419 329h1v1h-1zM419 351h1v1h-1zM419 373h1v1h-1zM419 395h1v1h-1zM419 418h1v1h-1zM419 440h1v1h-1zM419 462h1v1h-1zM419 484h1v1h-1zM419 507h1v1h-1zM419 529h1v1h-1zM419 551h1v1h-1zM419 573h1v1h-1zM419 596h1v1h-1zM442 17h1v1h-1zM442 40h1v1h-1zM442 62h1v1h-1zM442 84h1v1h-1zM442 106h1v1h-1zM442 128h1v1h-1zM442 151h1v1h-1zM442 173h1v1h-1zM442 195h1v1h-1zM442 217h1v1h-1zM442 240h1v1h-1zM442 262h1v1h-1zM442 284h1v1h-1zM442 306h1v1h-1zM442 329h1v1h-1zM442 351h1v1h-1zM442 373h1v1h-1zM442 395h1v1h-1zM442 418h1v1h-1zM442 440h1v1h-1zM442 462h1v1h-1zM442 484h1v1h-1zM442 507h1v1h-1zM442 529h1v1h-1zM442 551h1v1h-1zM442 573h1v1h-1zM442 596h1v1h-1zM464 17h1v1h-1zM464 40h1v1h-1zM464 62h1v1h-1zM464 84h1v1h-1zM464 106h1v1h-1zM464 128h1v1h-1zM464 151h1v1h-1zM464 173h1v1h-1zM464 195h1v1h-1zM464 217h1v1h-1zM464 240h1v1h-1zM464 262h1v1h-1zM464 284h1v1h-1zM464 306h1v1h-1zM464 329h1v1h-1zM464 351h1v1h-1zM464 373h1v1h-1zM464 395h1v1h-1zM464 418h1v1h-1zM464 440h1v1h-1zM464 462h1v1h-1zM464 484h1v1h-1zM464 507h1v1h-1zM464 529h1v1h-1zM464 551h1v1h-1zM464 573h1v1h-1zM464 596h1v1h-1zM486 17h1v1h-1zM486 40h1v1h-1zM486 62h1v1h-1zM486 84h1v1h-1zM486 106h1v1h-1zM486 128h1v1h-1zM486 151h1v1h-1zM486 173h1v1h-1zM486 195h1v1h-1zM486 217h1v1h-1zM486 240h1v1h-1zM486 262h1v1h-1zM486 284h1v1h-1zM486 306h1v1h-1zM486 329h1v1h-1zM486 351h1v1h-1zM486 373h1v1h-1zM486 395h1v1h-1zM486 418h1v1h-1zM486 440h1v1h-1zM486 462h1v1h-1zM486 484h1v1h-1zM486 507h1v1h-1zM486 529h1v1h-1zM486 551h1v1h-1zM486 573h1v1h-1zM486 596h1v1h-1zM508 17h1v1h-1zM508 40h1v1h-1zM508 62h1v1h-1zM508 84h1v1h-1zM508 106h1v1h-1zM508 128h1v1h-1zM508 151h1v1h-1zM508 173h1v1h-1zM508 195h1v1h-1zM508 217h1v1h-1zM508 240h1v1h-1zM508 262h1v1h-1zM508 284h1v1h-1zM508 306h1v1h-1zM508 329h1v1h-1zM508 351h1v1h-1zM508 373h1v1h-1zM508 395h1v1h-1zM508 418h1v1h-1zM508 440h1v1h-1zM508 462h1v1h-1zM508 484h1v1h-1zM508 507h1v1h-1zM508 529h1v1h-1zM508 551h1v1h-1zM508 573h1v1h-1zM508 596h1v1h-1zM531 17h1v1h-1zM531 40h1v1h-1zM531 62h1v1h-1zM531 84h1v1h-1zM531 106h1v1h-1zM531 128h1v1h-1zM531 151h1v1h-1zM531 173h1v1h-1zM531 195h1v1h-1zM531 217h1v1h-1zM531 240h1v1h-1zM531 262h1v1h-1zM531 284h1v1h-1zM531 306h1v1h-1zM531 329h1v1h-1zM531 351h1v1h-1zM531 373h1v1h-1zM531 395h1v1h-1zM531 418h1v1h-1zM531 440h1v1h-1zM531 462h1v1h-1zM531 484h1v1h-1zM531 507h1v1h-1zM531 529h1v1h-1zM531 551h1v1h-1zM531 573h1v1h-1zM531 596h1v1h-1zM553 17h1v1h-1zM553 40h1v1h-1zM553 62h1v1h-1zM553 84h1v1h-1zM553 106h1v1h-1zM553 128h1v1h-1zM553 151h1v1h-1zM553 173h1v1h-1zM553 195h1v1h-1zM553 217h1v1h-1zM553 240h1v1h-1zM553 262h1v1h-1zM553 284h1v1h-1zM553 306h1v1h-1zM553 329h1v1h-1zM553 351h1v1h-1zM553 373h1v1h-1zM553 395h1v1h-1zM553 418h1v1h-1zM553 440h1v1h-1zM553 462h1v1h-1zM553 484h1v1h-1zM553 507h1v1h-1zM553 529h1v1h-1zM553 551h1v1h-1zM553 573h1v1h-1zM553 596h1v1h-1zM575 17h1v1h-1zM575 40h1v1h-1zM575 62h1v1h-1zM575 84h1v1h-1zM575 106h1v1h-1zM575 128h1v1h-1zM575 151h1v1h-1zM575 173h1v1h-1zM575 195h1v1h-1zM575 217h1v1h-1zM575 240h1v1h-1zM575 262h1v1h-1zM575 284h1v1h-1zM575 306h1v1h-1zM575 329h1v1h-1zM575 351h1v1h-1zM575 373h1v1h-1zM575 395h1v1h-1zM575 418h1v1h-1zM575 440h1v1h-1zM575 462h1v1h-1zM575 484h1v1h-1zM575 507h1v1h-1zM575 529h1v1h-1zM575 551h1v1h-1zM575 573h1v1h-1zM575 596h1v1h-1zM597 17h1v1h-1zM597 40h1v1h-1zM597 62h1v1h-1zM597 84h1v1h-1zM597 106h1v1h-1zM597 128h1v1h-1zM597 151h1v1h-1zM597 173h1v1h-1zM597 195h1v1h-1zM597 217h1v1h-1zM597 240h1v1h-1zM597 262h1v1h-1zM597 284h1v1h-1zM597 306h1v1h-1zM597 329h1v1h-1zM597 351h1v1h-1zM597 373h1v1h-1zM597 395h1v1h-1zM597 418h1v1h-1zM597 440h1v1h-1zM597 462h1v1h-1zM597 484h1v1h-1zM597 507h1v1h-1zM597 529h1v1h-1zM597 551h1v1h-1zM597 573h1v1h-1zM597 596h1v1h-1zM620 17h1v1h-1zM620 40h1v1h-1zM620 62h1v1h-1zM620 84h1v1h-1zM620 106h1v1h-1zM620 128h1v1h-1zM620 151h1v1h-1zM620 173h1v1h-1zM620 195h1v1h-1zM620 217h1v1h-1zM620 240h1v1h-1zM620 262h1v1h-1zM620 284h1v1h-1zM620 306h1v1h-1zM620 329h1v1h-1zM620 351h1v1h-1zM620 373h1v1h-1zM620 395h1v1h-1zM620 418h1v1h-1zM620 440h1v1h-1zM620 462h1v1h-1zM620 484h1v1h-1zM620 507h1v1h-1zM620 529h1v1h-1zM620 551h1v1h-1zM620 573h1v1h-1zM620 596h1v1h-1zM642 17h1v1h-1zM642 40h1v1h-1zM642 62h1v1h-1zM642 84h1v1h-1zM642 106h1v1h-1zM642 128h1v1h-1zM642 151h1v1h-1zM642 173h1v1h-1zM642 195h1v1h-1zM642 217h1v1h-1zM642 240h1v1h-1zM642 262h1v1h-1zM642 284h1v1h-1zM642 306h1v1h-1zM642 329h1v1h-1zM642 351h1v1h-1zM642 373h1v1h-1zM642 395h1v1h-1zM642 418h1v1h-1zM642 440h1v1h-1zM642 462h1v1h-1zM642 484h1v1h-1zM642 507h1v1h-1zM642 529h1v1h-1zM642 551h1v1h-1zM642 573h1v1h-1zM642 596h1v1h-1zM664 17h1v1h-1zM664 40h1v1h-1zM664 62h1v1h-1zM664 84h1v1h-1zM664 106h1v1h-1zM664 128h1v1h-1zM664 151h1v1h-1zM664 173h1v1h-1zM664 195h1v1h-1zM664 217h1v1h-1zM664 240h1v1h-1zM664 262h1v1h-1zM664 284h1v1h-1zM664 306h1v1h-1zM664 329h1v1h-1zM664 351h1v1h-1zM664 373h1v1h-1zM664 395h1v1h-1zM664 418h1v1h-1zM664 440h1v1h-1zM664 462h1v1h-1zM664 484h1v1h-1zM664 507h1v1h-1zM664 529h1v1h-1zM664 551h1v1h-1zM664 573h1v1h-1zM664 596h1v1h-1zM686 17h1v1h-1zM686 40h1v1h-1zM686 62h1v1h-1zM686 84h1v1h-1zM686 106h1v1h-1zM686 128h1v1h-1zM686 151h1v1h-1zM686 173h1v1h-1zM686 195h1v1h-1zM686 217h1v1h-1zM686 240h1v1h-1zM686 262h1v1h-1zM686 284h1v1h-1zM686 306h1v1h-1zM686 329h1v1h-1zM686 351h1v1h-1zM686 373h1v1h-1zM686 395h1v1h-1zM686 418h1v1h-1zM686 440h1v1h-1zM686 462h1v1h-1zM686 484h1v1h-1zM686 507h1v1h-1zM686 529h1v1h-1zM686 551h1v1h-1zM686 573h1v1h-1zM686 596h1v1h-1zM709 17h1v1h-1zM709 40h1v1h-1zM709 62h1v1h-1zM709 84h1v1h-1zM709 106h1v1h-1zM709 128h1v1h-1zM709 151h1v1h-1zM709 173h1v1h-1zM709 195h1v1h-1zM709 217h1v1h-1zM709 240h1v1h-1zM709 262h1v1h-1zM709 284h1v1h-1zM709 306h1v1h-1zM709 329h1v1h-1zM709 351h1v1h-1zM709 373h1v1h-1zM709 395h1v1h-1zM709 418h1v1h-1zM709 440h1v1h-1zM709 462h1v1h-1zM709 484h1v1h-1zM709 507h1v1h-1zM709 529h1v1h-1zM709 551h1v1h-1zM709 573h1v1h-1zM709 596h1v1h-1zM731 17h1v1h-1zM731 40h1v1h-1zM731 62h1v1h-1zM731 84h1v1h-1zM731 106h1v1h-1zM731 128h1v1h-1zM731 151h1v1h-1zM731 173h1v1h-1zM731 195h1v1h-1zM731 217h1v1h-1zM731 240h1v1h-1zM731 262h1v1h-1zM731 284h1v1h-1zM731 306h1v1h-1zM731 329h1v1h-1zM731 351h1v1h-1zM731 373h1v1h-1zM731 395h1v1h-1zM731 418h1v1h-1zM731 440h1v1h-1zM731 462h1v1h-1zM731 484h1v1h-1zM731 507h1v1h-1zM731 529h1v1h-1zM731 551h1v1h-1zM731 573h1v1h-1zM731 596h1v1h-1zM753 17h1v1h-1zM753 40h1v1h-1zM753 62h1v1h-1zM753 84h1v1h-1zM753 106h1v1h-1zM753 128h1v1h-1zM753 151h1v1h-1zM753 173h1v1h-1zM753 195h1v1h-1zM753 217h1v1h-1zM753 240h1v1h-1zM753 262h1v1h-1zM753 284h1v1h-1zM753 306h1v1h-1zM753 329h1v1h-1zM753 351h1v1h-1zM753 373h1v1h-1zM753 395h1v1h-1zM753 418h1v1h-1zM753 440h1v1h-1zM753 462h1v1h-1zM753 484h1v1h-1zM753 507h1v1h-1zM753 529h1v1h-1zM753 551h1v1h-1zM753 573h1v1h-1zM753 596h1v1h-1zM775 17h1v1h-1zM775 40h1v1h-1zM775 62h1v1h-1zM775 84h1v1h-1zM775 106h1v1h-1zM775 128h1v1h-1zM775 151h1v1h-1zM775 173h1v1h-1zM775 195h1v1h-1zM775 217h1v1h-1zM775 240h1v1h-1zM775 262h1v1h-1zM775 284h1v1h-1zM775 306h1v1h-1zM775 329h1v1h-1zM775 351h1v1h-1zM775 373h1v1h-1zM775 395h1v1h-1zM775 418h1v1h-1zM775 440h1v1h-1zM775 462h1v1h-1zM775 484h1v1h-1zM775 507h1v1h-1zM775 529h1v1h-1zM775 551h1v1h-1zM775 573h1v1h-1zM775 596h1v1h-1zM797 17h1v1h-1zM797 40h1v1h-1zM797 62h1v1h-1zM797 84h1v1h-1zM797 106h1v1h-1zM797 128h1v1h-1zM797 151h1v1h-1zM797 173h1v1h-1zM797 195h1v1h-1zM797 217h1v1h-1zM797 240h1v1h-1zM797 262h1v1h-1zM797 284h1v1h-1zM797 306h1v1h-1zM797 329h1v1h-1zM797 351h1v1h-1zM797 373h1v1h-1zM797 395h1v1h-1zM797 418h1v1h-1zM797 440h1v1h-1zM797 462h1v1h-1zM797 484h1v1h-1zM797 507h1v1h-1zM797 529h1v1h-1zM797 551h1v1h-1zM797 573h1v1h-1zM797 596h1v1h-1z" fill="#fff"/><defs><clipPath id="sc"><polygon points="240.5,41.5 586.5,41.5 575.5,120 575.5,576.5 240.5,576.5"/></clipPath></defs><polygon points="240.5,41.5 586.5,41.5 575.5,120 575.5,576.5 240.5,576.5" fill="#c2c8d0"/><g clip-path="url(#sc)"><rect x="19" y="0" width="1" height="601" fill="#d2d1dc"/><rect x="41" y="0" width="1" height="601" fill="#e0ddd6"/><rect x="64" y="0" width="1" height="601" fill="#d2d1dc"/><rect x="86" y="0" width="1" height="601" fill="#d2d1dc"/><rect x="108" y="0" width="1" height="601" fill="#d2d1dc"/><rect x="130" y="0" width="1" height="601" fill="#d2d1dc"/><rect x="153" y="0" width="1" height="601" fill="#d2d1dc"/><rect x="175" y="0" width="1" height="601" fill="#d2d1dc"/><rect x="197" y="0" width="1" height="601" fill="#d2d1dc"/><rect x="219" y="0" width="1" height="601" fill="#d2d1dc"/><rect x="242" y="0" width="1" height="601" fill="#d2d1dc"/><rect x="264" y="0" width="1" height="601" fill="#e0ddd6"/><rect x="286" y="0" width="1" height="601" fill="#d2d1dc"/><rect x="308" y="0" width="1" height="601" fill="#d2d1dc"/><rect x="331" y="0" width="1" height="601" fill="#d2d1dc"/><rect x="353" y="0" width="1" height="601" fill="#d2d1dc"/><rect x="375" y="0" width="1" height="601" fill="#d2d1dc"/><rect x="397" y="0" width="1" height="601" fill="#d2d1dc"/><rect x="419" y="0" width="1" height="601" fill="#d2d1dc"/><rect x="442" y="0" width="1" height="601" fill="#d2d1dc"/><rect x="464" y="0" width="1" height="601" fill="#d2d1dc"/><rect x="486" y="0" width="1" height="601" fill="#e0ddd6"/><rect x="508" y="0" width="1" height="601" fill="#d2d1dc"/><rect x="531" y="0" width="1" height="601" fill="#d2d1dc"/><rect x="553" y="0" width="1" height="601" fill="#d2d1dc"/><rect x="575" y="0" width="1" height="601" fill="#d2d1dc"/><rect x="597" y="0" width="1" height="601" fill="#d2d1dc"/><rect x="620" y="0" width="1" height="601" fill="#d2d1dc"/><rect x="642" y="0" width="1" height="601" fill="#d2d1dc"/><rect x="664" y="0" width="1" height="601" fill="#d2d1dc"/><rect x="686" y="0" width="1" height="601" fill="#d2d1dc"/><rect x="709" y="0" width="1" height="601" fill="#e0ddd6"/><rect x="731" y="0" width="1" height="601" fill="#d2d1dc"/><rect x="753" y="0" width="1" height="601" fill="#d2d1dc"/><rect x="775" y="0" width="1" height="601" fill="#d2d1dc"/><rect x="797" y="0" width="1" height="601" fill="#d2d1dc"/><rect x="0" y="17" width="812" height="1" fill="#d2d1dc"/><rect x="0" y="40" width="812" height="1" fill="#d2d1dc"/><rect x="0" y="62" width="812" height="1" fill="#d2d1dc"/><rect x="0" y="84" width="812" height="1" fill="#d2d1dc"/><rect x="0" y="106" width="812" height="1" fill="#e0ddd6"/><rect x="0" y="128" width="812" height="1" fill="#d2d1dc"/><rect x="0" y="151" width="812" height="1" fill="#d2d1dc"/><rect x="0" y="173" width="812" height="1" fill="#d2d1dc"/><rect x="0" y="195" width="812" height="1" fill="#d2d1dc"/><rect x="0" y="217" width="812" height="1" fill="#d2d1dc"/><rect x="0" y="240" width="812" height="1" fill="#d2d1dc"/><rect x="0" y="262" width="812" height="1" fill="#d2d1dc"/><rect x="0" y="284" width="812" height="1" fill="#d2d1dc"/><rect x="0" y="306" width="812" height="1" fill="#d2d1dc"/><rect x="0" y="329" width="812" height="1" fill="#e0ddd6"/><rect x="0" y="351" width="812" height="1" fill="#d2d1dc"/><rect x="0" y="373" width="812" height="1" fill="#d2d1dc"/><rect x="0" y="395" width="812" height="1" fill="#d2d1dc"/><rect x="0" y="418" width="812" height="1" fill="#d2d1dc"/><rect x="0" y="440" width="812" height="1" fill="#d2d1dc"/><rect x="0" y="462" width="812" height="1" fill="#d2d1dc"/><rect x="0" y="484" width="812" height="1" fill="#d2d1dc"/><rect x="0" y="507" width="812" height="1" fill="#d2d1dc"/><rect x="0" y="529" width="812" height="1" fill="#d2d1dc"/><rect x="0" y="551" width="812" height="1" fill="#e0ddd6"/><rect x="0" y="573" width="812" height="1" fill="#d2d1dc"/><rect x="0" y="596" width="812" height="1" fill="#d2d1dc"/></g><polygon points="241.5,42.5 585.4,42.5 574.5,120 574.5,575.5 241.5,575.5" fill="none" stroke="#d4d9e1" stroke-width="1"/><polygon points="240.5,41.5 586.5,41.5 575.5,120 575.5,576.5 240.5,576.5" fill="none" stroke="#000" stroke-width="1.1"/><rect x="237" y="62" width="21" height="1" fill="#707070"/><path d="M271 62.5H554" stroke="#6e6e6e" stroke-width="1" stroke-dasharray="9 6 3 6" stroke-dashoffset="-6"/><rect x="237" y="225" width="21" height="1" fill="#707070"/><path d="M271 225.5H554" stroke="#6e6e6e" stroke-width="1" stroke-dasharray="9 6 3 6" stroke-dashoffset="-6"/><rect x="237" y="388" width="21" height="1" fill="#707070"/><path d="M271 388.5H554" stroke="#6e6e6e" stroke-width="1" stroke-dasharray="9 6 3 6" stroke-dashoffset="-6"/><rect x="237" y="551" width="21" height="1" fill="#707070"/><path d="M271 551.5H554" stroke="#6e6e6e" stroke-width="1" stroke-dasharray="9 6 3 6" stroke-dashoffset="-6"/><rect x="264" y="37" width="1" height="19" fill="#707070"/><path d="M264.5 69V545" stroke="#6e6e6e" stroke-width="1" stroke-dasharray="9 6 3 6" stroke-dashoffset="-3"/><rect x="412" y="37" width="1" height="19" fill="#707070"/><path d="M412.5 69V545" stroke="#6e6e6e" stroke-width="1" stroke-dasharray="9 6 3 6" stroke-dashoffset="-3"/><rect x="560" y="37" width="1" height="19" fill="#707070"/><path d="M560.5 69V545" stroke="#6e6e6e" stroke-width="1" stroke-dasharray="9 6 3 6" stroke-dashoffset="-3"/><circle cx="264" cy="30" r="6.5" fill="#fff"/><circle cx="412" cy="30" r="6.5" fill="#fff"/><circle cx="560" cy="30" r="6.5" fill="#fff"/><circle cx="231.5" cy="62" r="5.3" fill="#fff"/><circle cx="231.5" cy="225" r="5.3" fill="#fff"/><circle cx="231.5" cy="388" r="5.3" fill="#fff"/><circle cx="231.5" cy="551" r="5.3" fill="#fff"/><path d="M261 23h1v1h-1zM262 23h1v1h-1zM263 23h1v1h-1zM264 23h1v1h-1zM265 23h1v1h-1zM266 23h1v1h-1zM261 36h1v1h-1zM262 36h1v1h-1zM263 36h1v1h-1zM264 36h1v1h-1zM265 36h1v1h-1zM266 36h1v1h-1zM257 27h1v1h-1zM257 28h1v1h-1zM257 29h1v1h-1zM257 30h1v1h-1zM257 31h1v1h-1zM257 32h1v1h-1zM270 27h1v1h-1zM270 28h1v1h-1zM270 29h1v1h-1zM270 30h1v1h-1zM270 31h1v1h-1zM270 32h1v1h-1zM260 24h1v1h-1zM267 24h1v1h-1zM260 35h1v1h-1zM267 35h1v1h-1zM259 25h1v1h-1zM268 25h1v1h-1zM259 34h1v1h-1zM268 34h1v1h-1zM258 26h1v1h-1zM269 26h1v1h-1zM258 33h1v1h-1zM269 33h1v1h-1zM409 23h1v1h-1zM410 23h1v1h-1zM411 23h1v1h-1zM412 23h1v1h-1zM413 23h1v1h-1zM414 23h1v1h-1zM409 36h1v1h-1zM410 36h1v1h-1zM411 36h1v1h-1zM412 36h1v1h-1zM413 36h1v1h-1zM414 36h1v1h-1zM405 27h1v1h-1zM405 28h1v1h-1zM405 29h1v1h-1zM405 30h1v1h-1zM405 31h1v1h-1zM405 32h1v1h-1zM418 27h1v1h-1zM418 28h1v1h-1zM418 29h1v1h-1zM418 30h1v1h-1zM418 31h1v1h-1zM418 32h1v1h-1zM408 24h1v1h-1zM415 24h1v1h-1zM408 35h1v1h-1zM415 35h1v1h-1zM407 25h1v1h-1zM416 25h1v1h-1zM407 34h1v1h-1zM416 34h1v1h-1zM406 26h1v1h-1zM417 26h1v1h-1zM406 33h1v1h-1zM417 33h1v1h-1zM557 23h1v1h-1zM558 23h1v1h-1zM559 23h1v1h-1zM560 23h1v1h-1zM561 23h1v1h-1zM562 23h1v1h-1zM557 36h1v1h-1zM558 36h1v1h-1zM559 36h1v1h-1zM560 36h1v1h-1zM561 36h1v1h-1zM562 36h1v1h-1zM553 27h1v1h-1zM553 28h1v1h-1zM553 29h1v1h-1zM553 30h1v1h-1zM553 31h1v1h-1zM553 32h1v1h-1zM566 27h1v1h-1zM566 28h1v1h-1zM566 29h1v1h-1zM566 30h1v1h-1zM566 31h1v1h-1zM566 32h1v1h-1zM556 24h1v1h-1zM563 24h1v1h-1zM556 35h1v1h-1zM563 35h1v1h-1zM555 25h1v1h-1zM564 25h1v1h-1zM555 34h1v1h-1zM564 34h1v1h-1zM554 26h1v1h-1zM565 26h1v1h-1zM554 33h1v1h-1zM565 33h1v1h-1zM231 56h1v1h-1zM232 56h1v1h-1zM231 67h1v1h-1zM232 67h1v1h-1zM228 57h1v1h-1zM229 57h1v1h-1zM230 57h1v1h-1zM233 57h1v1h-1zM234 57h1v1h-1zM235 57h1v1h-1zM228 66h1v1h-1zM229 66h1v1h-1zM230 66h1v1h-1zM233 66h1v1h-1zM234 66h1v1h-1zM235 66h1v1h-1zM227 58h1v1h-1zM236 58h1v1h-1zM227 59h1v1h-1zM236 59h1v1h-1zM227 60h1v1h-1zM236 60h1v1h-1zM227 63h1v1h-1zM236 63h1v1h-1zM227 64h1v1h-1zM236 64h1v1h-1zM227 65h1v1h-1zM236 65h1v1h-1zM226 61h1v1h-1zM226 62h1v1h-1zM237 61h1v1h-1zM237 62h1v1h-1zM231 219h1v1h-1zM232 219h1v1h-1zM231 230h1v1h-1zM232 230h1v1h-1zM228 220h1v1h-1zM229 220h1v1h-1zM230 220h1v1h-1zM233 220h1v1h-1zM234 220h1v1h-1zM235 220h1v1h-1zM228 229h1v1h-1zM229 229h1v1h-1zM230 229h1v1h-1zM233 229h1v1h-1zM234 229h1v1h-1zM235 229h1v1h-1zM227 221h1v1h-1zM236 221h1v1h-1zM227 222h1v1h-1zM236 222h1v1h-1zM227 223h1v1h-1zM236 223h1v1h-1zM227 226h1v1h-1zM236 226h1v1h-1zM227 227h1v1h-1zM236 227h1v1h-1zM227 228h1v1h-1zM236 228h1v1h-1zM226 224h1v1h-1zM226 225h1v1h-1zM237 224h1v1h-1zM237 225h1v1h-1zM231 382h1v1h-1zM232 382h1v1h-1zM231 393h1v1h-1zM232 393h1v1h-1zM228 383h1v1h-1zM229 383h1v1h-1zM230 383h1v1h-1zM233 383h1v1h-1zM234 383h1v1h-1zM235 383h1v1h-1zM228 392h1v1h-1zM229 392h1v1h-1zM230 392h1v1h-1zM233 392h1v1h-1zM234 392h1v1h-1zM235 392h1v1h-1zM227 384h1v1h-1zM236 384h1v1h-1zM227 385h1v1h-1zM236 385h1v1h-1zM227 386h1v1h-1zM236 386h1v1h-1zM227 389h1v1h-1zM236 389h1v1h-1zM227 390h1v1h-1zM236 390h1v1h-1zM227 391h1v1h-1zM236 391h1v1h-1zM226 387h1v1h-1zM226 388h1v1h-1zM237 387h1v1h-1zM237 388h1v1h-1zM231 545h1v1h-1zM232 545h1v1h-1zM231 556h1v1h-1zM232 556h1v1h-1zM228 546h1v1h-1zM229 546h1v1h-1zM230 546h1v1h-1zM233 546h1v1h-1zM234 546h1v1h-1zM235 546h1v1h-1zM228 555h1v1h-1zM229 555h1v1h-1zM230 555h1v1h-1zM233 555h1v1h-1zM234 555h1v1h-1zM235 555h1v1h-1zM227 547h1v1h-1zM236 547h1v1h-1zM227 548h1v1h-1zM236 548h1v1h-1zM227 549h1v1h-1zM236 549h1v1h-1zM227 552h1v1h-1zM236 552h1v1h-1zM227 553h1v1h-1zM236 553h1v1h-1zM227 554h1v1h-1zM236 554h1v1h-1zM226 550h1v1h-1zM226 551h1v1h-1zM237 550h1v1h-1zM237 551h1v1h-1z" fill="#606060"/><text x="264" y="33" font-size="9.5" text-anchor="middle" fill="#505068" font-family="Liberation Sans">A</text><text x="412" y="33" font-size="9.5" text-anchor="middle" fill="#505068" font-family="Liberation Sans">B</text><text x="560" y="33" font-size="9.5" text-anchor="middle" fill="#505068" font-family="Liberation Sans">C</text><text x="231.5" y="65.5" font-size="10" text-anchor="middle" fill="#606078" font-family="Liberation Sans">4</text><text x="231.5" y="228.5" font-size="10" text-anchor="middle" fill="#606078" font-family="Liberation Sans">3</text><text x="231.5" y="391.5" font-size="10" text-anchor="middle" fill="#606078" font-family="Liberation Sans">2</text><text x="231.5" y="554.5" font-size="10" text-anchor="middle" fill="#606078" font-family="Liberation Sans">1</text><rect x="259.5" y="56.5" width="11" height="11" fill="#ecc8c8" stroke="#000" stroke-width="1.25"/><rect x="260.5" y="57.5" width="9" height="9" fill="none" stroke="#f4d8d8" stroke-width="0.8"/><rect x="264" y="57" width="1" height="9" fill="#8a8a8a"/><rect x="263" y="62" width="3" height="1" fill="#8a8a8a"/><rect x="263.79999999999995" y="53" width="1.4" height="5" fill="#1010f0"/><rect x="266" y="61.80000000000001" width="11" height="1.4" fill="#f01010"/><path d="M263 59.5A2.3 2.3 0 1 0 263 64.5" fill="none" stroke="#c86848" stroke-width="1"/><rect x="259.5" y="219.5" width="11" height="11" fill="#ecc8c8" stroke="#000" stroke-width="1.25"/><rect x="260.5" y="220.5" width="9" height="9" fill="none" stroke="#f4d8d8" stroke-width="0.8"/><rect x="264" y="220" width="1" height="9" fill="#8a8a8a"/><rect x="263" y="225" width="3" height="1" fill="#8a8a8a"/><rect x="263.79999999999995" y="216" width="1.4" height="5" fill="#1010f0"/><rect x="266" y="224.8" width="11" height="1.4" fill="#f01010"/><path d="M263 222.5A2.3 2.3 0 1 0 263 227.5" fill="none" stroke="#c86848" stroke-width="1"/><rect x="259.5" y="382.5" width="11" height="11" fill="#ecc8c8" stroke="#000" stroke-width="1.25"/><rect x="260.5" y="383.5" width="9" height="9" fill="none" stroke="#f4d8d8" stroke-width="0.8"/><rect x="264" y="383" width="1" height="9" fill="#8a8a8a"/><rect x="263" y="388" width="3" height="1" fill="#8a8a8a"/><rect x="263.79999999999995" y="379" width="1.4" height="5" fill="#1010f0"/><rect x="266" y="387.79999999999995" width="11" height="1.4" fill="#f01010"/><path d="M263 385.5A2.3 2.3 0 1 0 263 390.5" fill="none" stroke="#c86848" stroke-width="1"/><rect x="259.5" y="545.5" width="11" height="11" fill="#ecc8c8" stroke="#000" stroke-width="1.25"/><rect x="260.5" y="546.5" width="9" height="9" fill="none" stroke="#f4d8d8" stroke-width="0.8"/><rect x="264" y="546" width="1" height="9" fill="#8a8a8a"/><rect x="263" y="551" width="3" height="1" fill="#8a8a8a"/><rect x="263.79999999999995" y="542" width="1.4" height="5" fill="#1010f0"/><rect x="266" y="550.8" width="11" height="1.4" fill="#f01010"/><path d="M263 548.5A2.3 2.3 0 1 0 263 553.5" fill="none" stroke="#c86848" stroke-width="1"/><rect x="407.5" y="56.5" width="11" height="11" fill="#ecc8c8" stroke="#000" stroke-width="1.25"/><rect x="408.5" y="57.5" width="9" height="9" fill="none" stroke="#f4d8d8" stroke-width="0.8"/><rect x="412" y="57" width="1" height="9" fill="#8a8a8a"/><rect x="411" y="62" width="3" height="1" fill="#8a8a8a"/><rect x="411.79999999999995" y="53" width="1.4" height="5" fill="#1010f0"/><rect x="414" y="61.80000000000001" width="11" height="1.4" fill="#f01010"/><path d="M411 59.5A2.3 2.3 0 1 0 411 64.5" fill="none" stroke="#c86848" stroke-width="1"/><rect x="407.5" y="219.5" width="11" height="11" fill="#ecc8c8" stroke="#000" stroke-width="1.25"/><rect x="408.5" y="220.5" width="9" height="9" fill="none" stroke="#f4d8d8" stroke-width="0.8"/><rect x="412" y="220" width="1" height="9" fill="#8a8a8a"/><rect x="411" y="225" width="3" height="1" fill="#8a8a8a"/><rect x="411.79999999999995" y="216" width="1.4" height="5" fill="#1010f0"/><rect x="414" y="224.8" width="11" height="1.4" fill="#f01010"/><path d="M411 222.5A2.3 2.3 0 1 0 411 227.5" fill="none" stroke="#c86848" stroke-width="1"/><rect x="407.5" y="382.5" width="11" height="11" fill="#ecc8c8" stroke="#000" stroke-width="1.25"/><rect x="408.5" y="383.5" width="9" height="9" fill="none" stroke="#f4d8d8" stroke-width="0.8"/><rect x="412" y="383" width="1" height="9" fill="#8a8a8a"/><rect x="411" y="388" width="3" height="1" fill="#8a8a8a"/><rect x="411.79999999999995" y="379" width="1.4" height="5" fill="#1010f0"/><rect x="414" y="387.79999999999995" width="11" height="1.4" fill="#f01010"/><path d="M411 385.5A2.3 2.3 0 1 0 411 390.5" fill="none" stroke="#c86848" stroke-width="1"/><rect x="407.5" y="545.5" width="11" height="11" fill="#ecc8c8" stroke="#000" stroke-width="1.25"/><rect x="408.5" y="546.5" width="9" height="9" fill="none" stroke="#f4d8d8" stroke-width="0.8"/><rect x="412" y="546" width="1" height="9" fill="#8a8a8a"/><rect x="411" y="551" width="3" height="1" fill="#8a8a8a"/><rect x="411.79999999999995" y="542" width="1.4" height="5" fill="#1010f0"/><rect x="414" y="550.8" width="11" height="1.4" fill="#f01010"/><path d="M411 548.5A2.3 2.3 0 1 0 411 553.5" fill="none" stroke="#c86848" stroke-width="1"/><rect x="555.5" y="56.5" width="11" height="11" fill="#ecc8c8" stroke="#000" stroke-width="1.25"/><rect x="556.5" y="57.5" width="9" height="9" fill="none" stroke="#f4d8d8" stroke-width="0.8"/><rect x="560" y="57" width="1" height="9" fill="#8a8a8a"/><rect x="559" y="62" width="3" height="1" fill="#8a8a8a"/><rect x="559.8" y="53" width="1.4" height="5" fill="#1010f0"/><rect x="562" y="61.80000000000001" width="11" height="1.4" fill="#f01010"/><path d="M559 59.5A2.3 2.3 0 1 0 559 64.5" fill="none" stroke="#c86848" stroke-width="1"/><rect x="555.5" y="219.5" width="11" height="11" fill="#ecc8c8" stroke="#000" stroke-width="1.25"/><rect x="556.5" y="220.5" width="9" height="9" fill="none" stroke="#f4d8d8" stroke-width="0.8"/><rect x="560" y="220" width="1" height="9" fill="#8a8a8a"/><rect x="559" y="225" width="3" height="1" fill="#8a8a8a"/><rect x="559.8" y="216" width="1.4" height="5" fill="#1010f0"/><rect x="562" y="224.8" width="11" height="1.4" fill="#f01010"/><path d="M559 222.5A2.3 2.3 0 1 0 559 227.5" fill="none" stroke="#c86848" stroke-width="1"/><rect x="555.5" y="382.5" width="11" height="11" fill="#ecc8c8" stroke="#000" stroke-width="1.25"/><rect x="556.5" y="383.5" width="9" height="9" fill="none" stroke="#f4d8d8" stroke-width="0.8"/><rect x="560" y="383" width="1" height="9" fill="#8a8a8a"/><rect x="559" y="388" width="3" height="1" fill="#8a8a8a"/><rect x="559.8" y="379" width="1.4" height="5" fill="#1010f0"/><rect x="562" y="387.79999999999995" width="11" height="1.4" fill="#f01010"/><path d="M559 385.5A2.3 2.3 0 1 0 559 390.5" fill="none" stroke="#c86848" stroke-width="1"/><rect x="555.5" y="545.5" width="11" height="11" fill="#ecc8c8" stroke="#000" stroke-width="1.25"/><rect x="556.5" y="546.5" width="9" height="9" fill="none" stroke="#f4d8d8" stroke-width="0.8"/><rect x="560" y="546" width="1" height="9" fill="#8a8a8a"/><rect x="559" y="551" width="3" height="1" fill="#8a8a8a"/><rect x="559.8" y="542" width="1.4" height="5" fill="#1010f0"/><rect x="562" y="550.8" width="11" height="1.4" fill="#f01010"/><path d="M559 548.5A2.3 2.3 0 1 0 559 553.5" fill="none" stroke="#c86848" stroke-width="1"/><path d="M408 241V375.5M341 308H476" stroke="#000" stroke-width="2"/><path d="M408 241.5L414 251.5M408 375L401.5 363.5M341.5 308L352 301.5M475.5 308L463 314" stroke="#000" stroke-width="1.8"/></svg><div class="a" style="left:282px;top:421px;width:36px;height:75px;background:#7e0606;"></div><div class="a" style="left:283px;top:422px;width:34px;height:73px;background:#b02a1e;"></div><div class="a" style="left:284px;top:423px;width:32px;height:1px;background:#c4402c;"></div><div class="a" style="left:284px;top:423px;width:1px;height:71px;background:#c4402c;"></div><div class="a" style="left:315px;top:423px;width:1px;height:71px;background:#9a1a10;"></div><div class="a" style="left:284px;top:493px;width:32px;height:1px;background:#9a1a10;"></div><div class="a" style="left:287px;top:426px;width:26px;height:15px;background:#641610;"></div><div class="a" style="left:287px;top:440px;width:26px;height:1px;background:#5a0a06;"></div><div class="a" style="left:287px;top:441px;width:26px;height:50px;background:#e6e3de;"></div><svg class="a" style="left:287px;top:441px;" width="26" height="50" viewBox="0 0 26 50"><path d="M10 6.5L18 11.5M18 6L10.5 12" stroke="#8a8a8a" stroke-width="1.4"/><path d="M5 15.5H21" stroke="#9a9a9a" stroke-width="1"/><rect x="12.5" y="14" width="3" height="3" fill="#8a8a8a"/><path d="M5 36.5H21" stroke="#9a9a9a" stroke-width="3"/><path d="M8.5 32L16 40.5M16 32L9 40.5" stroke="#8a8a8a" stroke-width="1.6"/></svg>
</body></html>
